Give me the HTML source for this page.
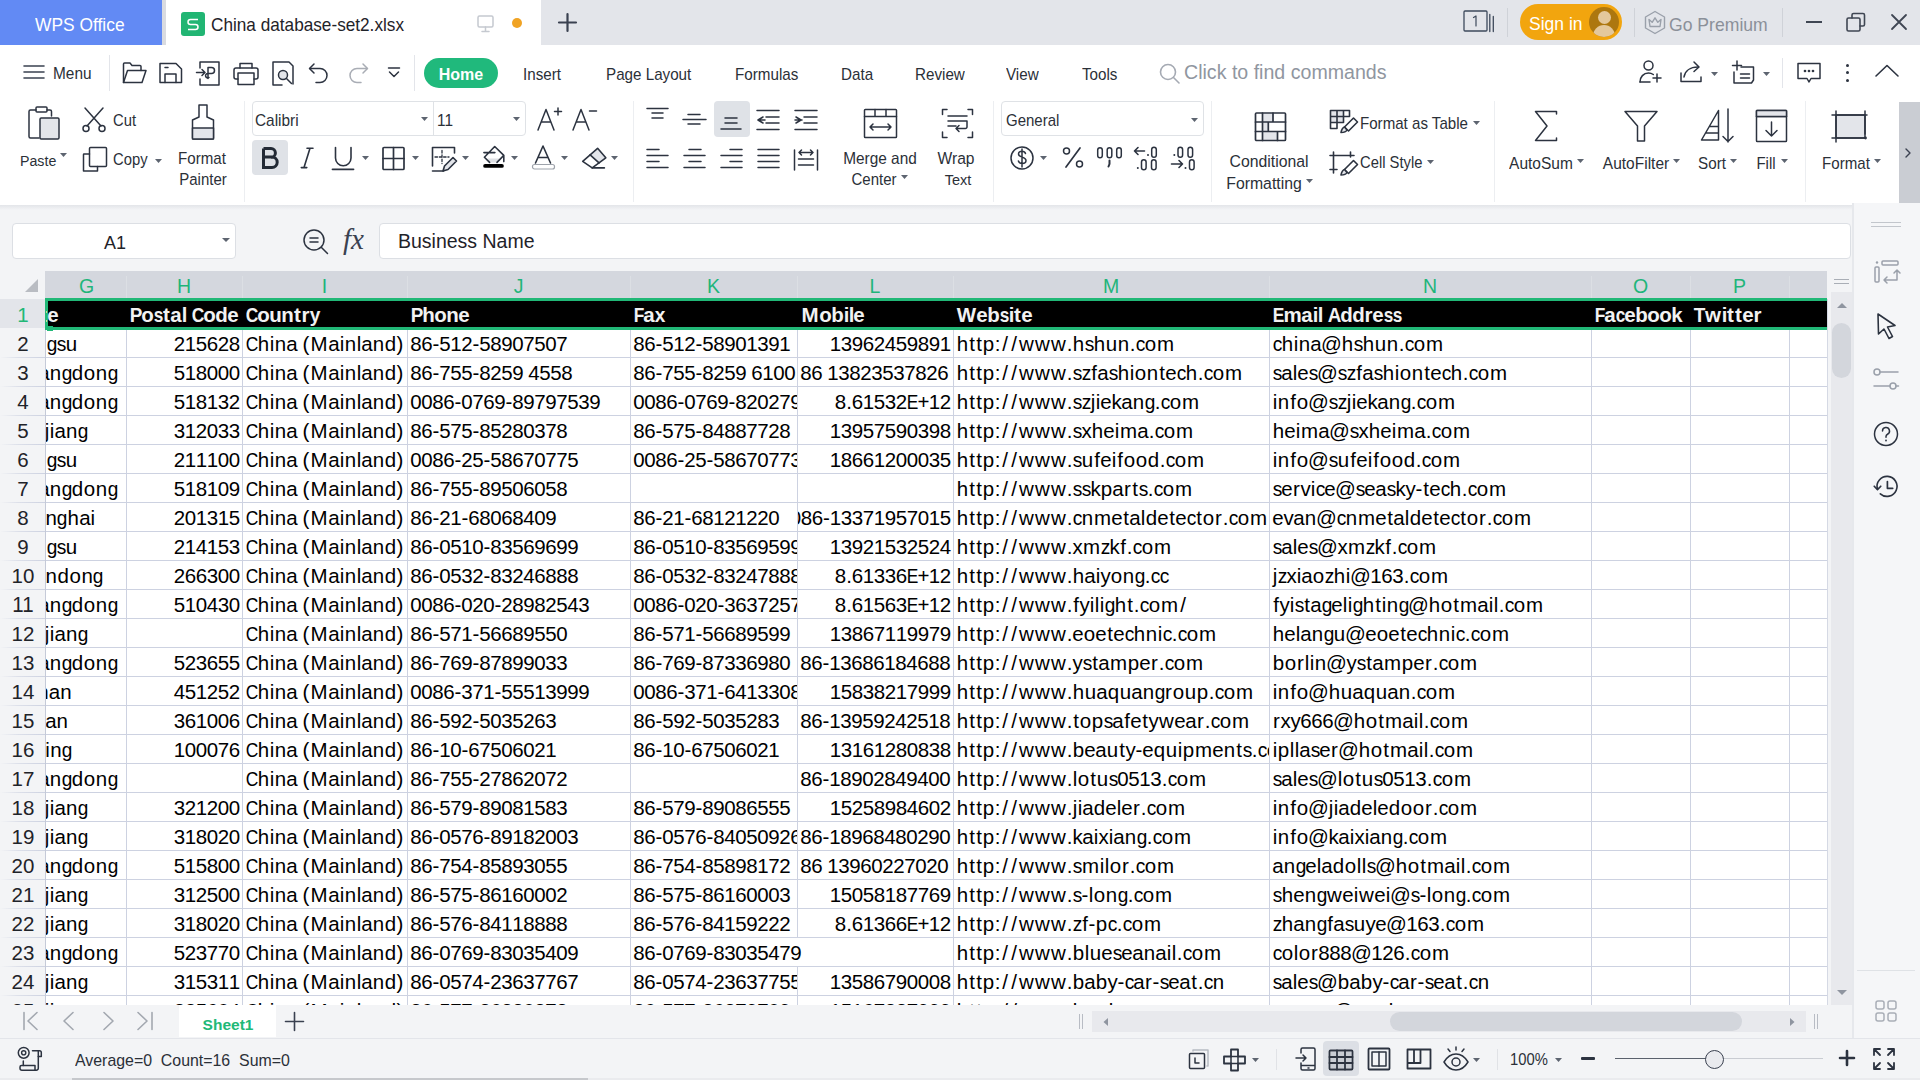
<!DOCTYPE html><html><head><meta charset="utf-8"><style>
*{margin:0;padding:0;box-sizing:border-box}
html,body{width:1920px;height:1080px;overflow:hidden;background:#fff;font-family:"Liberation Sans",sans-serif}
.t{position:absolute;white-space:pre;line-height:1}
.r{position:absolute}
.clip{position:absolute;overflow:hidden}
</style></head><body><div class="r" style="left:0px;top:0px;width:1920px;height:45px;background:#e3e5ea;"></div><div class="r" style="left:0px;top:0px;width:162px;height:45px;background:#628af4;"></div><div class="r" style="left:162px;top:0px;width:4px;height:45px;background:#d9dbe0;"></div><div class="r" style="left:166px;top:0px;width:375px;height:45px;background:#ffffff;"></div><div class="t" style="left:35px;top:17.07px;font-size:17.4px;color:#ffffff;transform:scaleY(1.08);transform-origin:0 14.73px;">WPS Office</div><div class="r" style="left:181px;top:12px;width:24px;height:24px;background:#21b573;border-radius:3px"></div><svg class="r" style="left:181px;top:12px;" width="24" height="24" viewBox="0 0 24 24" fill="none" stroke="#2c3340" stroke-width="1.5" stroke-linecap="round" stroke-linejoin="round"><path d="M17 7.5H9.5a2.5 2.5 0 0 0 0 5h5a2.5 2.5 0 0 1 0 5H7" stroke="#fff" stroke-width="1.5" stroke-linecap="butt"/></svg><div class="t" style="left:211px;top:17.24px;font-size:17.2px;color:#1f2329;transform:scaleY(1.1);transform-origin:0 14.56px;">China database-set2.xlsx</div><svg class="r" style="left:476px;top:14px;" width="20" height="19" viewBox="0 0 20 19" fill="none" stroke="#2c3340" stroke-width="1.5" stroke-linecap="round" stroke-linejoin="round"><rect x="2" y="2" width="15" height="11" rx="1.5" stroke="#c5c9d0"/><path d="M9.5 13v4M6 17.5h7" stroke="#c5c9d0"/></svg><div class="r" style="left:512px;top:18px;width:10px;height:10px;border-radius:50%;background:#f0a324"></div><svg class="r" style="left:557px;top:12px;" width="21" height="21" viewBox="0 0 21 21" fill="none" stroke="#2c3340" stroke-width="1.5" stroke-linecap="round" stroke-linejoin="round"><path d="M10.5 2v17M2 10.5h17" stroke="#3a4150" stroke-width="2.2"/></svg><svg class="r" style="left:1462px;top:9px;" width="36" height="25" viewBox="0 0 36 25" fill="none" stroke="#2c3340" stroke-width="1.5" stroke-linecap="round" stroke-linejoin="round"><rect x="2" y="2" width="23" height="20" rx="1" stroke="#3e4a5c" stroke-width="1.3"/><path d="M27.8 5.5v17M31.3 7.5v15" stroke="#3e4a5c" stroke-width="1.3"/><path d="M11.5 8.5l2.5-1.5V17" stroke="#3e4a5c" stroke-width="1.2"/></svg><div class="r" style="left:1507px;top:8px;width:1px;height:29px;background:#cfd2d8;"></div><div class="r" style="left:1520px;top:4px;width:102px;height:36px;background:#f2a50e;border-radius:18px"></div><div class="t" style="left:1529px;top:16.19px;font-size:17.5px;color:#ffffff;transform:scaleY(1.06);transform-origin:0 14.81px;">Sign in</div><div class="r" style="left:1589px;top:7px;width:30px;height:30px;border-radius:50%;background:#ad770f;overflow:hidden"><div class="r" style="left:8.5px;top:4px;width:13px;height:13px;border-radius:50%;background:#e4c89c"></div><div class="r" style="left:4px;top:18px;width:22px;height:16px;border-radius:11px 11px 0 0;background:#e4c89c"></div></div><div class="r" style="left:1634px;top:8px;width:1px;height:29px;background:#cfd2d8;"></div><svg class="r" style="left:1643px;top:10px;" width="24" height="26" viewBox="0 0 24 26" fill="none" stroke="#2c3340" stroke-width="1.5" stroke-linecap="round" stroke-linejoin="round"><path d="M12 1.5l9.5 5.5v11L12 23.5 2.5 18V7z" stroke="#9aa0aa" stroke-width="1.4"/><path d="M7 16.5h10l1-7-3.2 2.8L12 7.8l-2.8 4.5L6 9.5z" stroke="#9aa0aa" stroke-width="1.4"/></svg><div class="t" style="left:1669px;top:17.10px;font-size:17.6px;color:#8b9099;transform:scaleY(1.08);transform-origin:0 14.90px;">Go Premium</div><div class="r" style="left:1782px;top:8px;width:1px;height:29px;background:#cfd2d8;"></div><div class="r" style="left:1806px;top:21px;width:16px;height:2px;background:#3f4653;"></div><svg class="r" style="left:1845px;top:11px;" width="22" height="22" viewBox="0 0 22 22" fill="none" stroke="#2c3340" stroke-width="1.5" stroke-linecap="round" stroke-linejoin="round"><rect x="2" y="7" width="13" height="13" rx="1.5" stroke="#3f4653" stroke-width="1.6"/><path d="M7 7V4a1.5 1.5 0 0 1 1.5-1.5H18A1.5 1.5 0 0 1 19.5 4v9.5A1.5 1.5 0 0 1 18 15h-3" stroke="#3f4653" stroke-width="1.6"/></svg><svg class="r" style="left:1890px;top:13px;" width="18" height="18" viewBox="0 0 18 18" fill="none" stroke="#2c3340" stroke-width="1.5" stroke-linecap="round" stroke-linejoin="round"><path d="M2 2l14 14M16 2L2 16" stroke="#3f4653" stroke-width="1.8"/></svg><svg class="r" style="left:22px;top:63px;" width="24" height="18" viewBox="0 0 24 18" fill="none" stroke="#2c3340" stroke-width="1.5" stroke-linecap="round" stroke-linejoin="round"><path d="M2 3h20M2 9h20M2 15h20" stroke="#3a4150" stroke-width="1.6"/></svg><div class="t" style="left:53px;top:65.96px;font-size:15.4px;color:#2b3038;transform:scaleY(1.06);transform-origin:0 13.04px;">Menu</div><div class="r" style="left:109px;top:55px;width:1px;height:36px;background:#e3e5ea;"></div><svg class="r" style="left:121px;top:61px;" width="28" height="24" viewBox="0 0 28 24" fill="none" stroke="#2c3340" stroke-width="1.5" stroke-linecap="round" stroke-linejoin="round"><path d="M2.5 21.5V3A1 1 0 0 1 3.5 2H9l2 2.5h8A1 1 0 0 1 20 5.5V9.5"/><path d="M2.5 21.5l4-12h18.5l-4 12z"/></svg><svg class="r" style="left:158px;top:61px;" width="26" height="24" viewBox="0 0 26 24" fill="none" stroke="#2c3340" stroke-width="1.5" stroke-linecap="round" stroke-linejoin="round"><path d="M2 2.5h16l5.5 5.5v13.5H2z"/><path d="M7 21.5v-8.5h11v8.5M7 6.5h3"/></svg><svg class="r" style="left:195px;top:60px;" width="28" height="27" viewBox="0 0 28 27" fill="none" stroke="#2c3340" stroke-width="1.5" stroke-linecap="round" stroke-linejoin="round"><path d="M5 8V2h19v23H5v-6"/><path d="M1.5 12.5h8.5M7 9.5l3 3-3 3"/><path d="M13 18.5v-11h3.5a3 3 0 0 1 0 6h-3.5a2.2 2.2 0 1 0 1 4"/></svg><svg class="r" style="left:232px;top:61px;" width="28" height="26" viewBox="0 0 28 26" fill="none" stroke="#2c3340" stroke-width="1.5" stroke-linecap="round" stroke-linejoin="round"><path d="M8 7V2.5h12V7"/><path d="M6 18H4a2 2 0 0 1-2-2V9a2 2 0 0 1 2-2h20a2 2 0 0 1 2 2v7a2 2 0 0 1-2 2h-2"/><path d="M6 12h16v11.5H6z"/></svg><svg class="r" style="left:270px;top:60px;" width="26" height="27" viewBox="0 0 26 27" fill="none" stroke="#2c3340" stroke-width="1.5" stroke-linecap="round" stroke-linejoin="round"><path d="M12 25H3V2h16l4 4v18"/><circle cx="13" cy="15" r="4.5" fill="#e3e5ea"/><path d="M16.5 18.5l5 5"/></svg><svg class="r" style="left:307px;top:62px;" width="24" height="23" viewBox="0 0 24 23" fill="none" stroke="#2c3340" stroke-width="1.5" stroke-linecap="round" stroke-linejoin="round"><path d="M7 2L2.5 6.5 7 11"/><path d="M3 6.5h10a7 7 0 0 1 0 14H9"/></svg><svg class="r" style="left:346px;top:62px;" width="24" height="23" viewBox="0 0 24 23" fill="none" stroke="#2c3340" stroke-width="1.5" stroke-linecap="round" stroke-linejoin="round"><path d="M17 2l4.5 4.5L17 11" stroke="#a9adb5"/><path d="M21 6.5H11a7 7 0 0 0 0 14h4" stroke="#a9adb5"/></svg><svg class="r" style="left:387px;top:66px;" width="14" height="14" viewBox="0 0 14 14" fill="none" stroke="#2c3340" stroke-width="1.5" stroke-linecap="round" stroke-linejoin="round"><path d="M1.5 2h11M2.5 6l4.5 4.5L11.5 6"/></svg><div class="r" style="left:198px;top:0px;width:0px;height:0px;background:transparent;"></div><div class="r" style="left:414px;top:55px;width:1px;height:36px;background:#e3e5ea;"></div><div class="r" style="left:424px;top:58px;width:74px;height:30px;border-radius:15px;background:#20b97c"></div><div class="t" style="left:-39px;width:1000px;text-align:center;top:67.46px;font-size:16px;color:#ffffff;font-weight:700;">Home</div><div class="t" style="left:523px;top:67.13px;font-size:15.2px;color:#2b3038;transform:scaleY(1.05);transform-origin:0 12.87px;">Insert</div><div class="t" style="left:606px;top:67.13px;font-size:15.2px;color:#2b3038;transform:scaleY(1.05);transform-origin:0 12.87px;">Page Layout</div><div class="t" style="left:735px;top:67.13px;font-size:15.2px;color:#2b3038;transform:scaleY(1.05);transform-origin:0 12.87px;">Formulas</div><div class="t" style="left:841px;top:67.13px;font-size:15.2px;color:#2b3038;transform:scaleY(1.05);transform-origin:0 12.87px;">Data</div><div class="t" style="left:915px;top:67.13px;font-size:15.2px;color:#2b3038;transform:scaleY(1.05);transform-origin:0 12.87px;">Review</div><div class="t" style="left:1006px;top:67.13px;font-size:15.2px;color:#2b3038;transform:scaleY(1.05);transform-origin:0 12.87px;">View</div><div class="t" style="left:1082px;top:67.13px;font-size:15.2px;color:#2b3038;transform:scaleY(1.05);transform-origin:0 12.87px;">Tools</div><svg class="r" style="left:1158px;top:62px;" width="24" height="24" viewBox="0 0 24 24" fill="none" stroke="#2c3340" stroke-width="1.5" stroke-linecap="round" stroke-linejoin="round"><circle cx="10" cy="10" r="7.5" stroke="#a5aab3" stroke-width="1.6"/><path d="M15.5 15.5l5.5 5.5" stroke="#a5aab3" stroke-width="1.6"/></svg><div class="t" style="left:1184px;top:63.41px;font-size:19.6px;color:#9096a0;transform:scaleY(1.04);transform-origin:0 16.59px;">Click to find commands</div><svg class="r" style="left:1638px;top:59px;" width="26" height="26" viewBox="0 0 26 26" fill="none" stroke="#2c3340" stroke-width="1.5" stroke-linecap="round" stroke-linejoin="round"><circle cx="10.5" cy="6.5" r="4.5"/><path d="M2 23c0-5 3.5-9 8.5-9 2 0 3.5.6 4.8 1.5"/><path d="M2 23h10M19 15v8M15 19h8"/></svg><svg class="r" style="left:1678px;top:58px;" width="28" height="26" viewBox="0 0 28 26" fill="none" stroke="#2c3340" stroke-width="1.5" stroke-linecap="round" stroke-linejoin="round"><path d="M3 15v8.5h20V19"/><path d="M6 19c1-6 6-10 14-10"/><path d="M16 4l5 5-5 4.5"/></svg><svg class="r" style="left:1711px;top:72px" width="7" height="4" viewBox="0 0 7 4"><path d="M0 0H7L3.5 4Z" fill="#5d6470"/></svg><svg class="r" style="left:1731px;top:59px;" width="28" height="26" viewBox="0 0 28 26" fill="none" stroke="#2c3340" stroke-width="1.5" stroke-linecap="round" stroke-linejoin="round"><path d="M6 2v9M1.5 6.5h9"/><path d="M10 8h12.5v13l-2 3H3V13"/><path d="M9.5 15h9M9.5 19h9"/></svg><svg class="r" style="left:1763px;top:72px" width="7" height="4" viewBox="0 0 7 4"><path d="M0 0H7L3.5 4Z" fill="#5d6470"/></svg><div class="r" style="left:1782px;top:58px;width:1px;height:30px;background:#e3e5ea;"></div><svg class="r" style="left:1796px;top:61px;" width="26" height="22" viewBox="0 0 26 22" fill="none" stroke="#2c3340" stroke-width="1.5" stroke-linecap="round" stroke-linejoin="round"><path d="M2 2.5h22v15H15l-2 3.5-2-3.5H2z"/><circle cx="9" cy="10" r=".6" fill="#2c3340"/><circle cx="13" cy="10" r=".6" fill="#2c3340"/><circle cx="17" cy="10" r=".6" fill="#2c3340"/></svg><div class="r" style="left:1845.5px;top:63.5px;width:3px;height:3px;border-radius:50%;background:#2c3340"></div><div class="r" style="left:1845.5px;top:71.0px;width:3px;height:3px;border-radius:50%;background:#2c3340"></div><div class="r" style="left:1845.5px;top:78.5px;width:3px;height:3px;border-radius:50%;background:#2c3340"></div><svg class="r" style="left:1874px;top:63px;" width="26" height="16" viewBox="0 0 26 16" fill="none" stroke="#2c3340" stroke-width="1.5" stroke-linecap="round" stroke-linejoin="round"><path d="M2 13L13 2.5 24 13" stroke-width="1.6"/></svg><svg class="r" style="left:26px;top:103px;" width="36" height="38" viewBox="0 0 36 38" fill="none" stroke="#2c3340" stroke-width="1.5" stroke-linecap="round" stroke-linejoin="round"><path d="M10 7H4.5A1.5 1.5 0 0 0 3 8.5v25A1.5 1.5 0 0 0 4.5 35H13"/><path d="M21 7h3a1.5 1.5 0 0 1 1.5 1.5V13"/><rect x="10" y="4" width="11" height="5" rx="1"/><rect x="14" y="15" width="19" height="21" rx="1.2" fill="#e3e5ea"/></svg><div class="t" style="left:20px;top:153.98px;font-size:14.2px;color:#2b3038;transform:scaleY(1.08);transform-origin:0 12.02px;">Paste</div><svg class="r" style="left:60px;top:153px" width="7" height="4" viewBox="0 0 7 4"><path d="M0 0H7L3.5 4Z" fill="#5d6470"/></svg><svg class="r" style="left:81px;top:106px;" width="28" height="27" viewBox="0 0 28 27" fill="none" stroke="#2c3340" stroke-width="1.5" stroke-linecap="round" stroke-linejoin="round"><path d="M4 2l16 18M22 2L6 20"/><circle cx="5" cy="22.5" r="3"/><circle cx="21" cy="22.5" r="3"/></svg><div class="t" style="left:113px;top:114.47px;font-size:14.8px;color:#2b3038;transform:scaleY(1.08);transform-origin:0 12.53px;">Cut</div><svg class="r" style="left:81px;top:145px;" width="28" height="28" viewBox="0 0 28 28" fill="none" stroke="#2c3340" stroke-width="1.5" stroke-linecap="round" stroke-linejoin="round"><rect x="8.5" y="2.5" width="17" height="19" rx="1"/><path d="M8.5 9H3a.5.5 0 0 0-.5.5V26h14v-4.5"/></svg><div class="t" style="left:113px;top:153.47px;font-size:14.8px;color:#2b3038;transform:scaleY(1.08);transform-origin:0 12.53px;">Copy</div><svg class="r" style="left:155px;top:159px" width="7" height="4" viewBox="0 0 7 4"><path d="M0 0H7L3.5 4Z" fill="#5d6470"/></svg><svg class="r" style="left:186px;top:103px;" width="34" height="40" viewBox="0 0 34 40" fill="none" stroke="#2c3340" stroke-width="1.5" stroke-linecap="round" stroke-linejoin="round"><path d="M13 2h8v12l6.5 3V35a1 1 0 0 1-1 1H7.5a1 1 0 0 1-1-1V17l6.5-3z"/><path d="M6.5 25h21v11h-21z" fill="#e3e5ea"/></svg><div class="t" style="left:-298px;width:1000px;text-align:center;top:151.22px;font-size:15.1px;color:#2b3038;transform:scaleY(1.07);transform-origin:0 12.78px;">Format</div><div class="t" style="left:-297px;width:1000px;text-align:center;top:172.30px;font-size:15.0px;color:#2b3038;transform:scaleY(1.07);transform-origin:0 12.70px;">Painter</div><div class="r" style="left:244px;top:101px;width:1px;height:101px;background:#eceef1;"></div><div class="r" style="left:252px;top:101px;width:274px;height:35px;border:1px solid #dfe2e6;border-radius:4px;background:#fff"></div><div class="r" style="left:433px;top:102px;width:1px;height:33px;background:#dfe2e6;"></div><div class="t" style="left:255px;top:112.96px;font-size:15.4px;color:#2b3038;transform:scaleY(1.05);transform-origin:0 13.04px;">Calibri</div><svg class="r" style="left:421px;top:117px" width="7" height="4" viewBox="0 0 7 4"><path d="M0 0H7L3.5 4Z" fill="#5d6470"/></svg><div class="t" style="left:437px;top:112.96px;font-size:15.4px;color:#2b3038;transform:scaleY(1.05);transform-origin:0 13.04px;">11</div><svg class="r" style="left:513px;top:117px" width="7" height="4" viewBox="0 0 7 4"><path d="M0 0H7L3.5 4Z" fill="#5d6470"/></svg><svg class="r" style="left:536px;top:106px;" width="28" height="26" viewBox="0 0 28 26" fill="none" stroke="#2c3340" stroke-width="1.5" stroke-linecap="round" stroke-linejoin="round"><path d="M2 24L10 3.5 18 24M5.5 16h9"/><path d="M22 2v7M18.5 5.5h7"/></svg><svg class="r" style="left:571px;top:106px;" width="28" height="26" viewBox="0 0 28 26" fill="none" stroke="#2c3340" stroke-width="1.5" stroke-linecap="round" stroke-linejoin="round"><path d="M2 24L10 3.5 18 24M5.5 16h9"/><path d="M18.5 5h7"/></svg><div class="r" style="left:252px;top:140px;width:36px;height:35px;background:#dfe2e7;border-radius:4px"></div><svg class="r" style="left:258px;top:145px;" width="26" height="26" viewBox="0 0 26 26" fill="none" stroke="#2c3340" stroke-width="1.5" stroke-linecap="round" stroke-linejoin="round"><path d="M5.5 3.5v19h8.5a5.2 5.2 0 0 0 0-10.4H5.5M5.5 3.5h7.5a4.4 4.4 0 0 1 0 8.8" stroke="#232a35" stroke-width="3" stroke-linecap="butt" stroke-linejoin="miter"/></svg><svg class="r" style="left:295px;top:144px;" width="20" height="28" viewBox="0 0 20 28" fill="none" stroke="#2c3340" stroke-width="1.5" stroke-linecap="round" stroke-linejoin="round"><path d="M15 4.2L9 23.6M12 4.2h6M6.3 23.6h5.5" stroke-width="1.6"/></svg><svg class="r" style="left:329px;top:143px;" width="28" height="29" viewBox="0 0 28 29" fill="none" stroke="#2c3340" stroke-width="1.5" stroke-linecap="round" stroke-linejoin="round"><path d="M6.5 4.5v10.5a7.75 7.75 0 0 0 15.5 0V4.5" stroke-width="1.6"/><path d="M3.5 26.3h21" stroke-width="1.8"/></svg><svg class="r" style="left:362px;top:156px" width="7" height="4" viewBox="0 0 7 4"><path d="M0 0H7L3.5 4Z" fill="#5d6470"/></svg><svg class="r" style="left:381px;top:145px;" width="28" height="27" viewBox="0 0 28 27" fill="none" stroke="#2c3340" stroke-width="1.5" stroke-linecap="round" stroke-linejoin="round"><rect x="2" y="2.5" width="21" height="22" rx="1" stroke-width="1.7"/><path d="M12.5 2.5v22M2 13.5h21" stroke-width="1.7"/></svg><svg class="r" style="left:412px;top:156px" width="7" height="4" viewBox="0 0 7 4"><path d="M0 0H7L3.5 4Z" fill="#5d6470"/></svg><svg class="r" style="left:430px;top:144px;" width="28" height="29" viewBox="0 0 28 29" fill="none" stroke="#2c3340" stroke-width="1.5" stroke-linecap="round" stroke-linejoin="round"><path d="M2.5 22V3.5h22V9M2.5 27h11" stroke-width="1.6"/><path d="M5 13h14M12 6.5v13" stroke-width="1.3" stroke-dasharray="2.5 1.8"/><path d="M13 27l1.5-5 8.5-8.5 3.5 3.5-8.5 8.5z" fill="#e3e5ea" stroke-width="1.6"/></svg><svg class="r" style="left:462px;top:156px" width="7" height="4" viewBox="0 0 7 4"><path d="M0 0H7L3.5 4Z" fill="#5d6470"/></svg><svg class="r" style="left:478px;top:140px;" width="34" height="32" viewBox="0 0 34 32" fill="none" stroke="#2c3340" stroke-width="1.5" stroke-linecap="round" stroke-linejoin="round"><path d="M9.5 18.5H22L18.5 22.4H12z" fill="#dfe1e5" stroke="none"/><path d="M11.6 22.4L6.4 17.2 16.7 6.5 25.8 15.4 19 22.4M5.9 12.6H16.9M25.8 15.4V21.6" stroke-width="1.6"/><rect x="5.2" y="24" width="20.6" height="3.8" rx="1.9" fill="#000" stroke="none"/></svg><svg class="r" style="left:511px;top:156px" width="7" height="4" viewBox="0 0 7 4"><path d="M0 0H7L3.5 4Z" fill="#5d6470"/></svg><svg class="r" style="left:530px;top:143px;" width="30" height="30" viewBox="0 0 30 30" fill="none" stroke="#2c3340" stroke-width="1.5" stroke-linecap="round" stroke-linejoin="round"><path d="M5.5 20L13 3l7.5 17M8 14.5h10" stroke-width="1.6"/><rect x="2.5" y="21.5" width="22" height="4.5" rx="2" stroke="#9ea3ab" stroke-width="1.2"/></svg><svg class="r" style="left:561px;top:156px" width="7" height="4" viewBox="0 0 7 4"><path d="M0 0H7L3.5 4Z" fill="#5d6470"/></svg><svg class="r" style="left:580px;top:145px;" width="32" height="28" viewBox="0 0 32 28" fill="none" stroke="#2c3340" stroke-width="1.5" stroke-linecap="round" stroke-linejoin="round"><path d="M10.1 9.9L17.6 3.3 25.8 12.8 19 17.9z" fill="#e3e5ea" stroke="none"/><path d="M2.7 16.4L17.6 3.3 25.8 12.8 12.2 22.9z" stroke-width="1.6"/><path d="M10.1 9.9L19 17.9M12.2 22.9h12.2" stroke-width="1.6"/></svg><svg class="r" style="left:611px;top:156px" width="7" height="4" viewBox="0 0 7 4"><path d="M0 0H7L3.5 4Z" fill="#5d6470"/></svg><div class="r" style="left:633px;top:101px;width:1px;height:101px;background:#eceef1;"></div><svg class="r" style="left:645px;top:105px;" width="26" height="20" viewBox="0 0 26 20" fill="none" stroke="#2c3340" stroke-width="1.5" stroke-linecap="round" stroke-linejoin="round"><path d="M2 3.5h21"/><path d="M7 8h11"/><path d="M7 13h11"/></svg><div class="r" style="left:714px;top:101px;width:36px;height:36px;background:#dfe2e7;border-radius:4px"></div><svg class="r" style="left:681px;top:110px;" width="28" height="20" viewBox="0 0 28 20" fill="none" stroke="#2c3340" stroke-width="1.5" stroke-linecap="round" stroke-linejoin="round"><path d="M7 4.5h12"/><path d="M2 9.5h23"/><path d="M7 14h12"/></svg><svg class="r" style="left:719px;top:112px;" width="28" height="20" viewBox="0 0 28 20" fill="none" stroke="#2c3340" stroke-width="1.5" stroke-linecap="round" stroke-linejoin="round"><path d="M6 6h12"/><path d="M6 11h12"/><path d="M2 17h20"/></svg><svg class="r" style="left:755px;top:108px;" width="28" height="24" viewBox="0 0 28 24" fill="none" stroke="#2c3340" stroke-width="1.5" stroke-linecap="round" stroke-linejoin="round"><path d="M2 2.5h22M11 9h13M11 15h13M2 21.5h22M8 9l-5 3 5 3M3 12h7"/></svg><svg class="r" style="left:793px;top:108px;" width="28" height="24" viewBox="0 0 28 24" fill="none" stroke="#2c3340" stroke-width="1.5" stroke-linecap="round" stroke-linejoin="round"><path d="M2 2.5h22M11 9h13M11 15h13M2 21.5h22M3 9l5 3-5 3M2 12h7"/></svg><svg class="r" style="left:645px;top:147px;" width="26" height="24" viewBox="0 0 26 24" fill="none" stroke="#2c3340" stroke-width="1.5" stroke-linecap="round" stroke-linejoin="round"><path d="M2 2.5h12"/><path d="M2 8.5h21"/><path d="M2 14.5h12"/><path d="M2 20.5h21"/></svg><svg class="r" style="left:682px;top:147px;" width="26" height="24" viewBox="0 0 26 24" fill="none" stroke="#2c3340" stroke-width="1.5" stroke-linecap="round" stroke-linejoin="round"><path d="M7 2.5h12"/><path d="M2 8.5h21"/><path d="M7 14.5h12"/><path d="M2 20.5h21"/></svg><svg class="r" style="left:719px;top:147px;" width="26" height="24" viewBox="0 0 26 24" fill="none" stroke="#2c3340" stroke-width="1.5" stroke-linecap="round" stroke-linejoin="round"><path d="M11 2.5h12"/><path d="M2 8.5h21"/><path d="M11 14.5h12"/><path d="M2 20.5h21"/></svg><svg class="r" style="left:756px;top:147px;" width="26" height="24" viewBox="0 0 26 24" fill="none" stroke="#2c3340" stroke-width="1.5" stroke-linecap="round" stroke-linejoin="round"><path d="M2 2.5h21"/><path d="M2 8.5h21"/><path d="M2 14.5h21"/><path d="M2 20.5h21"/></svg><svg class="r" style="left:792px;top:146px;" width="28" height="25" viewBox="0 0 28 25" fill="none" stroke="#2c3340" stroke-width="1.5" stroke-linecap="round" stroke-linejoin="round"><path d="M2.5 4v20M25.5 4v20M6.5 13h15M6.5 19h15M7 6.5h14M9.5 4l-2.5 2.5L9.5 9M18.5 4l2.5 2.5L18.5 9"/></svg><svg class="r" style="left:862px;top:107px;" width="38" height="34" viewBox="0 0 38 34" fill="none" stroke="#2c3340" stroke-width="1.5" stroke-linecap="round" stroke-linejoin="round"><rect x="2.5" y="2.5" width="32" height="28" rx=".8"/><path d="M2.5 9.5h32M13 2.5v7M24 2.5v7M8 20h21M11 17l-3 3 3 3M26 17l3 3-3 3"/></svg><div class="t" style="left:380px;width:1000px;text-align:center;top:150.96px;font-size:15.4px;color:#2b3038;transform:scaleY(1.07);transform-origin:0 13.04px;">Merge and</div><div class="t" style="left:374px;width:1000px;text-align:center;top:172.30px;font-size:15.0px;color:#2b3038;transform:scaleY(1.07);transform-origin:0 12.70px;">Center</div><svg class="r" style="left:901px;top:175px" width="7" height="4" viewBox="0 0 7 4"><path d="M0 0H7L3.5 4Z" fill="#5d6470"/></svg><svg class="r" style="left:939px;top:107px;" width="38" height="34" viewBox="0 0 38 34" fill="none" stroke="#2c3340" stroke-width="1.5" stroke-linecap="round" stroke-linejoin="round"><path d="M8 2.5H3.5v5M29 2.5h4.5v5M3.5 25v5.5H8M33.5 25v5.5H29"/><path d="M9 9h19M9 14h19M9 19h8M28 14v6a1.5 1.5 0 0 1-1.5 1.5H17M20 18.5l-3 3 3 3"/></svg><div class="t" style="left:456px;width:1000px;text-align:center;top:150.79px;font-size:15.6px;color:#2b3038;transform:scaleY(1.07);transform-origin:0 13.21px;">Wrap</div><div class="t" style="left:458px;width:1000px;text-align:center;top:172.73px;font-size:14.5px;color:#2b3038;transform:scaleY(1.07);transform-origin:0 12.27px;">Text</div><div class="r" style="left:993px;top:101px;width:1px;height:101px;background:#eceef1;"></div><div class="r" style="left:1001px;top:101px;width:203px;height:35px;border:1px solid #dfe2e6;border-radius:4px;background:#fff"></div><div class="t" style="left:1006px;top:113.30px;font-size:15.0px;color:#2b3038;transform:scaleY(1.06);transform-origin:0 12.70px;">General</div><svg class="r" style="left:1191px;top:118px" width="7" height="4" viewBox="0 0 7 4"><path d="M0 0H7L3.5 4Z" fill="#5d6470"/></svg><svg class="r" style="left:1009px;top:145px;" width="28" height="28" viewBox="0 0 28 28" fill="none" stroke="#2c3340" stroke-width="1.5" stroke-linecap="round" stroke-linejoin="round"><circle cx="13" cy="13" r="11"/><path d="M16.5 8.5c-.5-1.5-2-2.2-3.5-2.2-2 0-3.5 1-3.5 2.8 0 3.8 7.5 2.2 7.5 6.3 0 1.8-1.7 3-3.8 3-1.8 0-3.3-.8-3.8-2.4M13 4v18"/></svg><svg class="r" style="left:1040px;top:156px" width="7" height="4" viewBox="0 0 7 4"><path d="M0 0H7L3.5 4Z" fill="#5d6470"/></svg><svg class="r" style="left:1060px;top:145px;" width="26" height="26" viewBox="0 0 26 26" fill="none" stroke="#2c3340" stroke-width="1.5" stroke-linecap="round" stroke-linejoin="round"><path d="M20 3L6 22" stroke-width="1.7"/><circle cx="6.5" cy="6" r="3"/><circle cx="19.5" cy="19" r="3"/></svg><svg class="r" style="left:1090px;top:140px;" width="110" height="34" viewBox="0 0 110 34" fill="none" stroke="#2c3340" stroke-width="1.5" stroke-linecap="round" stroke-linejoin="round"><rect x="7.7" y="7.7" width="4.6" height="10" rx="2.3" stroke-width="1.5"/><rect x="17.2" y="7.7" width="4.6" height="10" rx="2.3" stroke-width="1.5"/><rect x="26.7" y="7.7" width="4.6" height="10" rx="2.3" stroke-width="1.5"/><path d="M19.5 20.5v3.5l-1 2.5" stroke-width="2"/><path d="M44.5 11h10M48 7.5L44.5 11 48 14.5" stroke-width="1.6"/><circle cx="58" cy="15" r="1" fill="#2c3340" stroke="none"/><rect x="61.7" y="7.2" width="4.6" height="10" rx="2.3" stroke-width="1.5"/><circle cx="47.8" cy="28" r="1" fill="#2c3340" stroke="none"/><rect x="51.5" y="19.7" width="4.6" height="10" rx="2.3" stroke-width="1.5"/><rect x="61.5" y="19.7" width="4.6" height="10" rx="2.3" stroke-width="1.5"/><circle cx="84.3" cy="15" r="1" fill="#2c3340" stroke="none"/><rect x="88" y="7.2" width="4.6" height="10" rx="2.3" stroke-width="1.5"/><rect x="98" y="7.2" width="4.6" height="10" rx="2.3" stroke-width="1.5"/><path d="M81.5 24h11M89 20.5l3.5 3.5-3.5 3.5" stroke-width="1.6"/><circle cx="95.5" cy="28" r="1" fill="#2c3340" stroke="none"/><rect x="99.5" y="19.7" width="4.6" height="10" rx="2.3" stroke-width="1.5"/></svg><div class="r" style="left:1211px;top:101px;width:1px;height:101px;background:#eceef1;"></div><svg class="r" style="left:1253px;top:110px;" width="36" height="34" viewBox="0 0 36 34" fill="none" stroke="#2c3340" stroke-width="1.5" stroke-linecap="round" stroke-linejoin="round"><path d="M10 3.5h10.5v9H10zM10 12.5h5.5v9H10zM10 21.5h15v8.5H10z" fill="#e3e5ea" stroke="none"/><rect x="2.5" y="3" width="30" height="27.5" rx="1" stroke-width="1.7"/><path d="M2.5 12h30M2.5 21.5h30M9.5 3v27.5M20 3v9M15.3 12v9.5M24.5 21.5v9" stroke-width="1.7"/></svg><div class="t" style="left:769px;width:1000px;text-align:center;top:153.63px;font-size:15.8px;color:#2b3038;transform:scaleY(1.05);transform-origin:0 13.37px;">Conditional</div><div class="t" style="left:764px;width:1000px;text-align:center;top:175.63px;font-size:15.8px;color:#2b3038;transform:scaleY(1.05);transform-origin:0 13.37px;">Formatting</div><svg class="r" style="left:1306px;top:179px" width="7" height="4" viewBox="0 0 7 4"><path d="M0 0H7L3.5 4Z" fill="#5d6470"/></svg><svg class="r" style="left:1328px;top:108px;" width="32" height="30" viewBox="0 0 32 30" fill="none" stroke="#2c3340" stroke-width="1.5" stroke-linecap="round" stroke-linejoin="round"><path d="M3 3h12v12H3z" fill="#e3e5ea" stroke="none"/><path d="M2.5 2.5h19v6h-19zM2.5 8.5h13v6h-13zM2.5 14.5h6.5v6H2.5zM9 2.5v12M15.5 2.5v6" stroke-width="1.6"/><path d="M25.5 10l4 4-9 9-4-4z" stroke-width="1.6"/><path d="M16.5 19c-2 .5-3 3-3.5 5.5 2.5 0 5-.5 6-2.5z" fill="#e3e5ea" stroke-width="1.6"/></svg><div class="t" style="left:1360px;top:116.22px;font-size:15.1px;color:#2b3038;transform:scaleY(1.07);transform-origin:0 12.78px;">Format as Table</div><svg class="r" style="left:1473px;top:121px" width="7" height="4" viewBox="0 0 7 4"><path d="M0 0H7L3.5 4Z" fill="#5d6470"/></svg><svg class="r" style="left:1328px;top:149px;" width="32" height="30" viewBox="0 0 32 30" fill="none" stroke="#2c3340" stroke-width="1.5" stroke-linecap="round" stroke-linejoin="round"><path d="M2 6.5h24M5.5 3v21M22.5 3v5M2 20.5h7" stroke-width="1.6"/><path d="M25.5 11.5l4 4-9 9-4-4z" stroke-width="1.6"/><path d="M16.5 20.5c-2 .5-3 3-3.5 5.5 2.5 0 5-.5 6-2.5z" fill="#e3e5ea" stroke-width="1.6"/></svg><div class="t" style="left:1360px;top:156.47px;font-size:14.8px;color:#2b3038;transform:scaleY(1.07);transform-origin:0 12.53px;">Cell Style</div><svg class="r" style="left:1427px;top:160px" width="7" height="4" viewBox="0 0 7 4"><path d="M0 0H7L3.5 4Z" fill="#5d6470"/></svg><div class="r" style="left:1494px;top:101px;width:1px;height:101px;background:#eceef1;"></div><svg class="r" style="left:1532px;top:108px;" width="32" height="36" viewBox="0 0 32 36" fill="none" stroke="#2c3340" stroke-width="1.5" stroke-linecap="round" stroke-linejoin="round"><path d="M24.5 6V3.5H3.5L15 18 3.5 32.5h21V30"/></svg><div class="t" style="left:1041px;width:1000px;text-align:center;top:155.88px;font-size:15.5px;color:#2b3038;transform:scaleY(1.06);transform-origin:0 13.12px;">AutoSum</div><svg class="r" style="left:1577px;top:159px" width="7" height="4" viewBox="0 0 7 4"><path d="M0 0H7L3.5 4Z" fill="#5d6470"/></svg><svg class="r" style="left:1622px;top:108px;" width="38" height="36" viewBox="0 0 38 36" fill="none" stroke="#2c3340" stroke-width="1.5" stroke-linecap="round" stroke-linejoin="round"><path d="M3 3.5h32L22.5 18v15h-7V18z"/></svg><div class="t" style="left:1136px;width:1000px;text-align:center;top:155.88px;font-size:15.5px;color:#2b3038;transform:scaleY(1.06);transform-origin:0 13.12px;">AutoFilter</div><svg class="r" style="left:1673px;top:159px" width="7" height="4" viewBox="0 0 7 4"><path d="M0 0H7L3.5 4Z" fill="#5d6470"/></svg><svg class="r" style="left:1699px;top:107px;" width="40" height="38" viewBox="0 0 40 38" fill="none" stroke="#2c3340" stroke-width="1.5" stroke-linecap="round" stroke-linejoin="round"><path d="M2.5 33L19.5 3.5V33z M2.5 33h17M10.5 19.5h9M6.5 26h13"/><path d="M29 2v33M24 29.5l5 5 5-5"/></svg><div class="t" style="left:1212px;width:1000px;text-align:center;top:156.13px;font-size:15.2px;color:#2b3038;transform:scaleY(1.06);transform-origin:0 12.87px;">Sort</div><svg class="r" style="left:1730px;top:159px" width="7" height="4" viewBox="0 0 7 4"><path d="M0 0H7L3.5 4Z" fill="#5d6470"/></svg><svg class="r" style="left:1754px;top:108px;" width="36" height="36" viewBox="0 0 36 36" fill="none" stroke="#2c3340" stroke-width="1.5" stroke-linecap="round" stroke-linejoin="round"><rect x="2.5" y="2.5" width="30" height="31" rx=".8"/><path d="M2.5 8.5h30" /><path d="M2.5 2.5h30v6h-30z" fill="#e3e5ea"/><path d="M17.5 14v14M12 22.5l5.5 5.5 5.5-5.5"/></svg><div class="t" style="left:1266px;width:1000px;text-align:center;top:156.30px;font-size:15.0px;color:#2b3038;transform:scaleY(1.06);transform-origin:0 12.70px;">Fill</div><svg class="r" style="left:1781px;top:159px" width="7" height="4" viewBox="0 0 7 4"><path d="M0 0H7L3.5 4Z" fill="#5d6470"/></svg><div class="r" style="left:1805px;top:101px;width:1px;height:101px;background:#eceef1;"></div><svg class="r" style="left:1830px;top:109px;" width="40" height="36" viewBox="0 0 40 36" fill="none" stroke="#2c3340" stroke-width="1.5" stroke-linecap="round" stroke-linejoin="round"><path d="M6 6h29v23H6z" fill="#e3e5ea"/><path d="M6 2v31M2 6h35M2 29h33M35 2v23"/><circle cx="35.5" cy="29" r="1.4" fill="#2c3340" stroke="none"/></svg><div class="t" style="left:1346px;width:1000px;text-align:center;top:156.22px;font-size:15.1px;color:#2b3038;transform:scaleY(1.07);transform-origin:0 12.78px;">Format</div><svg class="r" style="left:1874px;top:159px" width="7" height="4" viewBox="0 0 7 4"><path d="M0 0H7L3.5 4Z" fill="#5d6470"/></svg><div class="r" style="left:1899px;top:102px;width:21px;height:101px;background:#cacdd3;"></div><svg class="r" style="left:1903px;top:146px;" width="10" height="14" viewBox="0 0 10 14" fill="none" stroke="#2c3340" stroke-width="1.5" stroke-linecap="round" stroke-linejoin="round"><path d="M3 3l4 4-4 4" stroke="#3a4150" stroke-width="1.4"/></svg><div class="r" style="left:0px;top:205px;width:1853px;height:66px;background:#f3f4f6;"></div><div class="r" style="left:0;top:205px;width:1853px;height:5px;background:linear-gradient(#e3e5e9,#f3f4f6)"></div><div class="r" style="left:12px;top:223px;width:224px;height:36px;border:1px solid #dcdfe4;border-radius:4px;background:#fff"></div><div class="t" style="left:-385px;width:1000px;text-align:center;top:233.76px;font-size:18px;color:#1f2329;">A1</div><svg class="r" style="left:222px;top:238px" width="8" height="4" viewBox="0 0 8 4"><path d="M0 0H8L4.0 4Z" fill="#5d6470"/></svg><svg class="r" style="left:301px;top:227px;" width="30" height="30" viewBox="0 0 30 30" fill="none" stroke="#2c3340" stroke-width="1.5" stroke-linecap="round" stroke-linejoin="round"><circle cx="13" cy="13" r="10"/><path d="M20.5 20.5l6 6M9 11h8M9 15h8"/></svg><div class="t" style="left:343px;top:224.5px;font-size:29px;font-family:'Liberation Serif',serif;font-style:italic;color:#3a4150">fx</div><div class="r" style="left:379px;top:223px;width:1472px;height:36px;border:1px solid #dcdfe4;border-radius:4px;background:#fff"></div><div class="t" style="left:398px;top:232.49px;font-size:19.5px;color:#1f2329;">Business Name</div><style>.row{position:absolute;white-space:pre;line-height:1}.row i{font-style:normal;display:inline-block;text-align:left}</style><div class="r" style="left:0px;top:271px;width:45px;height:28px;background:#f3f4f6;"></div><div class="r" style="left:45px;top:271px;width:1782px;height:27px;background:#d4d7de;"></div><div class="t" style="left:-413.5px;width:1000px;text-align:center;top:276.99px;font-size:19.5px;color:#1fb57a;">G</div><div class="t" style="left:-316.0px;width:1000px;text-align:center;top:276.99px;font-size:19.5px;color:#1fb57a;">H</div><div class="t" style="left:-175.5px;width:1000px;text-align:center;top:276.99px;font-size:19.5px;color:#1fb57a;">I</div><div class="t" style="left:18.5px;width:1000px;text-align:center;top:276.99px;font-size:19.5px;color:#1fb57a;">J</div><div class="t" style="left:213.5px;width:1000px;text-align:center;top:276.99px;font-size:19.5px;color:#1fb57a;">K</div><div class="t" style="left:375.0px;width:1000px;text-align:center;top:276.99px;font-size:19.5px;color:#1fb57a;">L</div><div class="t" style="left:611.0px;width:1000px;text-align:center;top:276.99px;font-size:19.5px;color:#1fb57a;">M</div><div class="t" style="left:930.0px;width:1000px;text-align:center;top:276.99px;font-size:19.5px;color:#1fb57a;">N</div><div class="t" style="left:1140.5px;width:1000px;text-align:center;top:276.99px;font-size:19.5px;color:#1fb57a;">O</div><div class="t" style="left:1239.5px;width:1000px;text-align:center;top:276.99px;font-size:19.5px;color:#1fb57a;">P</div><div class="r" style="left:126px;top:276px;width:1px;height:22px;background:#dcdfe4;"></div><div class="r" style="left:242px;top:276px;width:1px;height:22px;background:#dcdfe4;"></div><div class="r" style="left:407px;top:276px;width:1px;height:22px;background:#dcdfe4;"></div><div class="r" style="left:630px;top:276px;width:1px;height:22px;background:#dcdfe4;"></div><div class="r" style="left:797px;top:276px;width:1px;height:22px;background:#dcdfe4;"></div><div class="r" style="left:953px;top:276px;width:1px;height:22px;background:#dcdfe4;"></div><div class="r" style="left:1269px;top:276px;width:1px;height:22px;background:#dcdfe4;"></div><div class="r" style="left:1591px;top:276px;width:1px;height:22px;background:#dcdfe4;"></div><div class="r" style="left:1690px;top:276px;width:1px;height:22px;background:#dcdfe4;"></div><div class="r" style="left:1789px;top:276px;width:1px;height:22px;background:#dcdfe4;"></div><svg class="r" style="left:24px;top:278px;" width="16" height="16" viewBox="0 0 16 16" fill="none" stroke="#2c3340" stroke-width="1.5" stroke-linecap="round" stroke-linejoin="round"><path d="M14 1L14 14L1 14Z" fill="#b9bcc2" stroke="none"/></svg><div class="r" style="left:46px;top:299px;width:1781px;height:706px;background:#ffffff;"></div><div class="r" style="left:0px;top:299px;width:45px;height:706px;background:#f3f4f6;"></div><div class="r" style="left:0px;top:299px;width:45px;height:29px;background:#e3e5ea;"></div><div class="r" style="left:0;top:357px;width:45px;height:1px;background:linear-gradient(90deg,rgba(205,210,225,0) 0%,rgba(205,210,225,.6) 40%,#cdd2e1 100%)"></div><div class="r" style="left:0;top:386px;width:45px;height:1px;background:linear-gradient(90deg,rgba(205,210,225,0) 0%,rgba(205,210,225,.6) 40%,#cdd2e1 100%)"></div><div class="r" style="left:0;top:415px;width:45px;height:1px;background:linear-gradient(90deg,rgba(205,210,225,0) 0%,rgba(205,210,225,.6) 40%,#cdd2e1 100%)"></div><div class="r" style="left:0;top:444px;width:45px;height:1px;background:linear-gradient(90deg,rgba(205,210,225,0) 0%,rgba(205,210,225,.6) 40%,#cdd2e1 100%)"></div><div class="r" style="left:0;top:473px;width:45px;height:1px;background:linear-gradient(90deg,rgba(205,210,225,0) 0%,rgba(205,210,225,.6) 40%,#cdd2e1 100%)"></div><div class="r" style="left:0;top:502px;width:45px;height:1px;background:linear-gradient(90deg,rgba(205,210,225,0) 0%,rgba(205,210,225,.6) 40%,#cdd2e1 100%)"></div><div class="r" style="left:0;top:531px;width:45px;height:1px;background:linear-gradient(90deg,rgba(205,210,225,0) 0%,rgba(205,210,225,.6) 40%,#cdd2e1 100%)"></div><div class="r" style="left:0;top:560px;width:45px;height:1px;background:linear-gradient(90deg,rgba(205,210,225,0) 0%,rgba(205,210,225,.6) 40%,#cdd2e1 100%)"></div><div class="r" style="left:0;top:589px;width:45px;height:1px;background:linear-gradient(90deg,rgba(205,210,225,0) 0%,rgba(205,210,225,.6) 40%,#cdd2e1 100%)"></div><div class="r" style="left:0;top:618px;width:45px;height:1px;background:linear-gradient(90deg,rgba(205,210,225,0) 0%,rgba(205,210,225,.6) 40%,#cdd2e1 100%)"></div><div class="r" style="left:0;top:647px;width:45px;height:1px;background:linear-gradient(90deg,rgba(205,210,225,0) 0%,rgba(205,210,225,.6) 40%,#cdd2e1 100%)"></div><div class="r" style="left:0;top:676px;width:45px;height:1px;background:linear-gradient(90deg,rgba(205,210,225,0) 0%,rgba(205,210,225,.6) 40%,#cdd2e1 100%)"></div><div class="r" style="left:0;top:705px;width:45px;height:1px;background:linear-gradient(90deg,rgba(205,210,225,0) 0%,rgba(205,210,225,.6) 40%,#cdd2e1 100%)"></div><div class="r" style="left:0;top:734px;width:45px;height:1px;background:linear-gradient(90deg,rgba(205,210,225,0) 0%,rgba(205,210,225,.6) 40%,#cdd2e1 100%)"></div><div class="r" style="left:0;top:763px;width:45px;height:1px;background:linear-gradient(90deg,rgba(205,210,225,0) 0%,rgba(205,210,225,.6) 40%,#cdd2e1 100%)"></div><div class="r" style="left:0;top:792px;width:45px;height:1px;background:linear-gradient(90deg,rgba(205,210,225,0) 0%,rgba(205,210,225,.6) 40%,#cdd2e1 100%)"></div><div class="r" style="left:0;top:821px;width:45px;height:1px;background:linear-gradient(90deg,rgba(205,210,225,0) 0%,rgba(205,210,225,.6) 40%,#cdd2e1 100%)"></div><div class="r" style="left:0;top:850px;width:45px;height:1px;background:linear-gradient(90deg,rgba(205,210,225,0) 0%,rgba(205,210,225,.6) 40%,#cdd2e1 100%)"></div><div class="r" style="left:0;top:879px;width:45px;height:1px;background:linear-gradient(90deg,rgba(205,210,225,0) 0%,rgba(205,210,225,.6) 40%,#cdd2e1 100%)"></div><div class="r" style="left:0;top:908px;width:45px;height:1px;background:linear-gradient(90deg,rgba(205,210,225,0) 0%,rgba(205,210,225,.6) 40%,#cdd2e1 100%)"></div><div class="r" style="left:0;top:937px;width:45px;height:1px;background:linear-gradient(90deg,rgba(205,210,225,0) 0%,rgba(205,210,225,.6) 40%,#cdd2e1 100%)"></div><div class="r" style="left:0;top:966px;width:45px;height:1px;background:linear-gradient(90deg,rgba(205,210,225,0) 0%,rgba(205,210,225,.6) 40%,#cdd2e1 100%)"></div><div class="r" style="left:0;top:995px;width:45px;height:1px;background:linear-gradient(90deg,rgba(205,210,225,0) 0%,rgba(205,210,225,.6) 40%,#cdd2e1 100%)"></div><div class="r" style="left:45px;top:299px;width:1px;height:706px;background:#c5cad8;"></div><div class="t" style="left:-477px;width:1000px;text-align:center;top:304.65px;font-size:20.5px;color:#21b877;">1</div><div class="t" style="left:-477px;width:1000px;text-align:center;top:333.65px;font-size:20.5px;color:#1f2329;">2</div><div class="t" style="left:-477px;width:1000px;text-align:center;top:362.65px;font-size:20.5px;color:#1f2329;">3</div><div class="t" style="left:-477px;width:1000px;text-align:center;top:391.65px;font-size:20.5px;color:#1f2329;">4</div><div class="t" style="left:-477px;width:1000px;text-align:center;top:420.65px;font-size:20.5px;color:#1f2329;">5</div><div class="t" style="left:-477px;width:1000px;text-align:center;top:449.65px;font-size:20.5px;color:#1f2329;">6</div><div class="t" style="left:-477px;width:1000px;text-align:center;top:478.65px;font-size:20.5px;color:#1f2329;">7</div><div class="t" style="left:-477px;width:1000px;text-align:center;top:507.65px;font-size:20.5px;color:#1f2329;">8</div><div class="t" style="left:-477px;width:1000px;text-align:center;top:536.65px;font-size:20.5px;color:#1f2329;">9</div><div class="t" style="left:-477px;width:1000px;text-align:center;top:565.65px;font-size:20.5px;color:#1f2329;">10</div><div class="t" style="left:-477px;width:1000px;text-align:center;top:594.65px;font-size:20.5px;color:#1f2329;transform:scaleY(1.05);transform-origin:0 17.35px;">11</div><div class="t" style="left:-477px;width:1000px;text-align:center;top:623.65px;font-size:20.5px;color:#1f2329;">12</div><div class="t" style="left:-477px;width:1000px;text-align:center;top:652.65px;font-size:20.5px;color:#1f2329;">13</div><div class="t" style="left:-477px;width:1000px;text-align:center;top:681.65px;font-size:20.5px;color:#1f2329;">14</div><div class="t" style="left:-477px;width:1000px;text-align:center;top:710.65px;font-size:20.5px;color:#1f2329;">15</div><div class="t" style="left:-477px;width:1000px;text-align:center;top:739.65px;font-size:20.5px;color:#1f2329;">16</div><div class="t" style="left:-477px;width:1000px;text-align:center;top:768.65px;font-size:20.5px;color:#1f2329;">17</div><div class="t" style="left:-477px;width:1000px;text-align:center;top:797.65px;font-size:20.5px;color:#1f2329;">18</div><div class="t" style="left:-477px;width:1000px;text-align:center;top:826.65px;font-size:20.5px;color:#1f2329;">19</div><div class="t" style="left:-477px;width:1000px;text-align:center;top:855.65px;font-size:20.5px;color:#1f2329;">20</div><div class="t" style="left:-477px;width:1000px;text-align:center;top:884.65px;font-size:20.5px;color:#1f2329;">21</div><div class="t" style="left:-477px;width:1000px;text-align:center;top:913.65px;font-size:20.5px;color:#1f2329;">22</div><div class="t" style="left:-477px;width:1000px;text-align:center;top:942.65px;font-size:20.5px;color:#1f2329;">23</div><div class="t" style="left:-477px;width:1000px;text-align:center;top:971.65px;font-size:20.5px;color:#1f2329;">24</div><div class="t" style="left:-477px;width:1000px;text-align:center;top:1000.65px;font-size:20.5px;color:#1f2329;">25</div><div class="r" style="left:46px;top:357px;width:1781px;height:1px;background:#cdd2e1;"></div><div class="r" style="left:46px;top:386px;width:1781px;height:1px;background:#cdd2e1;"></div><div class="r" style="left:46px;top:415px;width:1781px;height:1px;background:#cdd2e1;"></div><div class="r" style="left:46px;top:444px;width:1781px;height:1px;background:#cdd2e1;"></div><div class="r" style="left:46px;top:473px;width:1781px;height:1px;background:#cdd2e1;"></div><div class="r" style="left:46px;top:502px;width:1781px;height:1px;background:#cdd2e1;"></div><div class="r" style="left:46px;top:531px;width:1781px;height:1px;background:#cdd2e1;"></div><div class="r" style="left:46px;top:560px;width:1781px;height:1px;background:#cdd2e1;"></div><div class="r" style="left:46px;top:589px;width:1781px;height:1px;background:#cdd2e1;"></div><div class="r" style="left:46px;top:618px;width:1781px;height:1px;background:#cdd2e1;"></div><div class="r" style="left:46px;top:647px;width:1781px;height:1px;background:#cdd2e1;"></div><div class="r" style="left:46px;top:676px;width:1781px;height:1px;background:#cdd2e1;"></div><div class="r" style="left:46px;top:705px;width:1781px;height:1px;background:#cdd2e1;"></div><div class="r" style="left:46px;top:734px;width:1781px;height:1px;background:#cdd2e1;"></div><div class="r" style="left:46px;top:763px;width:1781px;height:1px;background:#cdd2e1;"></div><div class="r" style="left:46px;top:792px;width:1781px;height:1px;background:#cdd2e1;"></div><div class="r" style="left:46px;top:821px;width:1781px;height:1px;background:#cdd2e1;"></div><div class="r" style="left:46px;top:850px;width:1781px;height:1px;background:#cdd2e1;"></div><div class="r" style="left:46px;top:879px;width:1781px;height:1px;background:#cdd2e1;"></div><div class="r" style="left:46px;top:908px;width:1781px;height:1px;background:#cdd2e1;"></div><div class="r" style="left:46px;top:937px;width:1781px;height:1px;background:#cdd2e1;"></div><div class="r" style="left:46px;top:966px;width:1781px;height:1px;background:#cdd2e1;"></div><div class="r" style="left:46px;top:995px;width:1781px;height:1px;background:#cdd2e1;"></div><div class="r" style="left:126px;top:328px;width:1px;height:677px;background:#cdd2e1;"></div><div class="r" style="left:242px;top:328px;width:1px;height:677px;background:#cdd2e1;"></div><div class="r" style="left:407px;top:328px;width:1px;height:677px;background:#cdd2e1;"></div><div class="r" style="left:630px;top:328px;width:1px;height:677px;background:#cdd2e1;"></div><div class="r" style="left:797px;top:328px;width:1px;height:609px;background:#cdd2e1;"></div><div class="r" style="left:797px;top:966px;width:1px;height:39px;background:#cdd2e1;"></div><div class="r" style="left:953px;top:328px;width:1px;height:677px;background:#cdd2e1;"></div><div class="r" style="left:1269px;top:328px;width:1px;height:677px;background:#cdd2e1;"></div><div class="r" style="left:1591px;top:328px;width:1px;height:677px;background:#cdd2e1;"></div><div class="r" style="left:1690px;top:328px;width:1px;height:677px;background:#cdd2e1;"></div><div class="r" style="left:1789px;top:328px;width:1px;height:677px;background:#cdd2e1;"></div><div class="clip" style="left:46px;top:328px;width:80px;height:28px"><div class="row" style="left:-11.50px;top:5.65px;font-size:20.5px;color:#000;"><i class="k0">n</i><i class="k1">g</i><i class="k2">s</i><i class="k3">u</i></div></div><div class="clip" style="left:127px;top:328px;width:115px;height:28px"><div class="row" style="left:47.00px;top:5.65px;font-size:20.5px;color:#000;"><i class="k4">2</i><i class="k5">1</i><i class="k6">5</i><i class="k7">6</i><i class="k4">2</i><i class="k8">8</i></div></div><div class="clip" style="left:243px;top:328px;width:164px;height:28px"><div class="row" style="left:2.50px;top:5.65px;font-size:20.5px;color:#000;"><i class="k9">C</i><i class="k10">h</i><i class="k11">i</i><i class="k0">n</i><i class="k12">a</i><i class="k13"> </i><i class="k14">(</i><i class="k15">M</i><i class="k12">a</i><i class="k11">i</i><i class="k0">n</i><i class="k16">l</i><i class="k12">a</i><i class="k0">n</i><i class="k17">d</i><i class="k18">)</i></div></div><div class="clip" style="left:408px;top:328px;width:222px;height:28px"><div class="row" style="left:2.50px;top:5.65px;font-size:20.5px;color:#000;"><i class="k8">8</i><i class="k7">6</i><i class="k19">-</i><i class="k6">5</i><i class="k5">1</i><i class="k4">2</i><i class="k19">-</i><i class="k6">5</i><i class="k8">8</i><i class="k20">9</i><i class="k21">0</i><i class="k22">7</i><i class="k6">5</i><i class="k21">0</i><i class="k22">7</i></div></div><div class="clip" style="left:631px;top:328px;width:166px;height:28px"><div class="row" style="left:2.50px;top:5.65px;font-size:20.5px;color:#000;"><i class="k8">8</i><i class="k7">6</i><i class="k19">-</i><i class="k6">5</i><i class="k5">1</i><i class="k4">2</i><i class="k19">-</i><i class="k6">5</i><i class="k8">8</i><i class="k20">9</i><i class="k21">0</i><i class="k5">1</i><i class="k23">3</i><i class="k20">9</i><i class="k5">1</i></div></div><div class="clip" style="left:798px;top:328px;width:155px;height:28px"><div class="row" style="left:32.00px;top:5.65px;font-size:20.5px;color:#000;"><i class="k5">1</i><i class="k23">3</i><i class="k20">9</i><i class="k7">6</i><i class="k4">2</i><i class="k24">4</i><i class="k6">5</i><i class="k20">9</i><i class="k8">8</i><i class="k20">9</i><i class="k5">1</i></div></div><div class="clip" style="left:954px;top:328px;width:315px;height:28px"><div class="row" style="left:2.50px;top:5.65px;font-size:20.5px;color:#000;"><i class="k10">h</i><i class="k25">t</i><i class="k25">t</i><i class="k26">p</i><i class="k27">:</i><i class="k28">/</i><i class="k28">/</i><i class="k29">w</i><i class="k29">w</i><i class="k29">w</i><i class="k30">.</i><i class="k10">h</i><i class="k2">s</i><i class="k10">h</i><i class="k3">u</i><i class="k0">n</i><i class="k30">.</i><i class="k31">c</i><i class="k32">o</i><i class="k33">m</i></div></div><div class="clip" style="left:1270px;top:328px;width:321px;height:28px"><div class="row" style="left:2.50px;top:5.65px;font-size:20.5px;color:#000;"><i class="k31">c</i><i class="k10">h</i><i class="k11">i</i><i class="k0">n</i><i class="k12">a</i><i class="k34">@</i><i class="k10">h</i><i class="k2">s</i><i class="k10">h</i><i class="k3">u</i><i class="k0">n</i><i class="k30">.</i><i class="k31">c</i><i class="k32">o</i><i class="k33">m</i></div></div><div class="clip" style="left:46px;top:357px;width:80px;height:28px"><div class="row" style="left:-7.50px;top:5.65px;font-size:20.5px;color:#000;"><i class="k12">a</i><i class="k0">n</i><i class="k1">g</i><i class="k17">d</i><i class="k32">o</i><i class="k0">n</i><i class="k1">g</i></div></div><div class="clip" style="left:127px;top:357px;width:115px;height:28px"><div class="row" style="left:47.00px;top:5.65px;font-size:20.5px;color:#000;"><i class="k6">5</i><i class="k5">1</i><i class="k8">8</i><i class="k21">0</i><i class="k21">0</i><i class="k21">0</i></div></div><div class="clip" style="left:243px;top:357px;width:164px;height:28px"><div class="row" style="left:2.50px;top:5.65px;font-size:20.5px;color:#000;"><i class="k9">C</i><i class="k10">h</i><i class="k11">i</i><i class="k0">n</i><i class="k12">a</i><i class="k13"> </i><i class="k14">(</i><i class="k15">M</i><i class="k12">a</i><i class="k11">i</i><i class="k0">n</i><i class="k16">l</i><i class="k12">a</i><i class="k0">n</i><i class="k17">d</i><i class="k18">)</i></div></div><div class="clip" style="left:408px;top:357px;width:222px;height:28px"><div class="row" style="left:2.50px;top:5.65px;font-size:20.5px;color:#000;"><i class="k8">8</i><i class="k7">6</i><i class="k19">-</i><i class="k22">7</i><i class="k6">5</i><i class="k6">5</i><i class="k19">-</i><i class="k8">8</i><i class="k4">2</i><i class="k6">5</i><i class="k20">9</i><i class="k13"> </i><i class="k24">4</i><i class="k6">5</i><i class="k6">5</i><i class="k8">8</i></div></div><div class="clip" style="left:631px;top:357px;width:166px;height:28px"><div class="row" style="left:2.50px;top:5.65px;font-size:20.5px;color:#000;"><i class="k8">8</i><i class="k7">6</i><i class="k19">-</i><i class="k22">7</i><i class="k6">5</i><i class="k6">5</i><i class="k19">-</i><i class="k8">8</i><i class="k4">2</i><i class="k6">5</i><i class="k20">9</i><i class="k13"> </i><i class="k7">6</i><i class="k5">1</i><i class="k21">0</i><i class="k21">0</i></div></div><div class="clip" style="left:798px;top:357px;width:155px;height:28px"><div class="row" style="left:2.50px;top:5.65px;font-size:20.5px;color:#000;"><i class="k8">8</i><i class="k7">6</i><i class="k13"> </i><i class="k5">1</i><i class="k23">3</i><i class="k8">8</i><i class="k4">2</i><i class="k23">3</i><i class="k6">5</i><i class="k23">3</i><i class="k22">7</i><i class="k8">8</i><i class="k4">2</i><i class="k7">6</i></div></div><div class="clip" style="left:954px;top:357px;width:315px;height:28px"><div class="row" style="left:2.50px;top:5.65px;font-size:20.5px;color:#000;"><i class="k10">h</i><i class="k25">t</i><i class="k25">t</i><i class="k26">p</i><i class="k27">:</i><i class="k28">/</i><i class="k28">/</i><i class="k29">w</i><i class="k29">w</i><i class="k29">w</i><i class="k30">.</i><i class="k2">s</i><i class="k35">z</i><i class="k36">f</i><i class="k12">a</i><i class="k2">s</i><i class="k10">h</i><i class="k11">i</i><i class="k32">o</i><i class="k0">n</i><i class="k25">t</i><i class="k37">e</i><i class="k31">c</i><i class="k10">h</i><i class="k30">.</i><i class="k31">c</i><i class="k32">o</i><i class="k33">m</i></div></div><div class="clip" style="left:1270px;top:357px;width:321px;height:28px"><div class="row" style="left:2.50px;top:5.65px;font-size:20.5px;color:#000;"><i class="k2">s</i><i class="k12">a</i><i class="k16">l</i><i class="k37">e</i><i class="k2">s</i><i class="k34">@</i><i class="k2">s</i><i class="k35">z</i><i class="k36">f</i><i class="k12">a</i><i class="k2">s</i><i class="k10">h</i><i class="k11">i</i><i class="k32">o</i><i class="k0">n</i><i class="k25">t</i><i class="k37">e</i><i class="k31">c</i><i class="k10">h</i><i class="k30">.</i><i class="k31">c</i><i class="k32">o</i><i class="k33">m</i></div></div><div class="clip" style="left:46px;top:386px;width:80px;height:28px"><div class="row" style="left:-7.50px;top:5.65px;font-size:20.5px;color:#000;"><i class="k12">a</i><i class="k0">n</i><i class="k1">g</i><i class="k17">d</i><i class="k32">o</i><i class="k0">n</i><i class="k1">g</i></div></div><div class="clip" style="left:127px;top:386px;width:115px;height:28px"><div class="row" style="left:47.00px;top:5.65px;font-size:20.5px;color:#000;"><i class="k6">5</i><i class="k5">1</i><i class="k8">8</i><i class="k5">1</i><i class="k23">3</i><i class="k4">2</i></div></div><div class="clip" style="left:243px;top:386px;width:164px;height:28px"><div class="row" style="left:2.50px;top:5.65px;font-size:20.5px;color:#000;"><i class="k9">C</i><i class="k10">h</i><i class="k11">i</i><i class="k0">n</i><i class="k12">a</i><i class="k13"> </i><i class="k14">(</i><i class="k15">M</i><i class="k12">a</i><i class="k11">i</i><i class="k0">n</i><i class="k16">l</i><i class="k12">a</i><i class="k0">n</i><i class="k17">d</i><i class="k18">)</i></div></div><div class="clip" style="left:408px;top:386px;width:222px;height:28px"><div class="row" style="left:2.50px;top:5.65px;font-size:20.5px;color:#000;"><i class="k21">0</i><i class="k21">0</i><i class="k8">8</i><i class="k7">6</i><i class="k19">-</i><i class="k21">0</i><i class="k22">7</i><i class="k7">6</i><i class="k20">9</i><i class="k19">-</i><i class="k8">8</i><i class="k20">9</i><i class="k22">7</i><i class="k20">9</i><i class="k22">7</i><i class="k6">5</i><i class="k23">3</i><i class="k20">9</i></div></div><div class="clip" style="left:631px;top:386px;width:166px;height:28px"><div class="row" style="left:2.50px;top:5.65px;font-size:20.5px;color:#000;"><i class="k21">0</i><i class="k21">0</i><i class="k8">8</i><i class="k7">6</i><i class="k19">-</i><i class="k21">0</i><i class="k22">7</i><i class="k7">6</i><i class="k20">9</i><i class="k19">-</i><i class="k8">8</i><i class="k4">2</i><i class="k21">0</i><i class="k4">2</i><i class="k22">7</i><i class="k20">9</i><i class="k20">9</i><i class="k20">9</i></div></div><div class="clip" style="left:798px;top:386px;width:155px;height:28px"><div class="row" style="left:37.00px;top:5.65px;font-size:20.5px;color:#000;"><i class="k8">8</i><i class="k30">.</i><i class="k7">6</i><i class="k5">1</i><i class="k6">5</i><i class="k23">3</i><i class="k4">2</i><i class="k38">E</i><i class="k39">+</i><i class="k5">1</i><i class="k4">2</i></div></div><div class="clip" style="left:954px;top:386px;width:315px;height:28px"><div class="row" style="left:2.50px;top:5.65px;font-size:20.5px;color:#000;"><i class="k10">h</i><i class="k25">t</i><i class="k25">t</i><i class="k26">p</i><i class="k27">:</i><i class="k28">/</i><i class="k28">/</i><i class="k29">w</i><i class="k29">w</i><i class="k29">w</i><i class="k30">.</i><i class="k2">s</i><i class="k35">z</i><i class="k40">j</i><i class="k11">i</i><i class="k37">e</i><i class="k41">k</i><i class="k12">a</i><i class="k0">n</i><i class="k1">g</i><i class="k30">.</i><i class="k31">c</i><i class="k32">o</i><i class="k33">m</i></div></div><div class="clip" style="left:1270px;top:386px;width:321px;height:28px"><div class="row" style="left:2.50px;top:5.65px;font-size:20.5px;color:#000;"><i class="k11">i</i><i class="k0">n</i><i class="k36">f</i><i class="k32">o</i><i class="k34">@</i><i class="k2">s</i><i class="k35">z</i><i class="k40">j</i><i class="k11">i</i><i class="k37">e</i><i class="k41">k</i><i class="k12">a</i><i class="k0">n</i><i class="k1">g</i><i class="k30">.</i><i class="k31">c</i><i class="k32">o</i><i class="k33">m</i></div></div><div class="clip" style="left:46px;top:415px;width:80px;height:28px"><div class="row" style="left:-12.40px;top:5.65px;font-size:20.5px;color:#000;"><i class="k37">e</i><i class="k40">j</i><i class="k11">i</i><i class="k12">a</i><i class="k0">n</i><i class="k1">g</i></div></div><div class="clip" style="left:127px;top:415px;width:115px;height:28px"><div class="row" style="left:47.00px;top:5.65px;font-size:20.5px;color:#000;"><i class="k23">3</i><i class="k5">1</i><i class="k4">2</i><i class="k21">0</i><i class="k23">3</i><i class="k23">3</i></div></div><div class="clip" style="left:243px;top:415px;width:164px;height:28px"><div class="row" style="left:2.50px;top:5.65px;font-size:20.5px;color:#000;"><i class="k9">C</i><i class="k10">h</i><i class="k11">i</i><i class="k0">n</i><i class="k12">a</i><i class="k13"> </i><i class="k14">(</i><i class="k15">M</i><i class="k12">a</i><i class="k11">i</i><i class="k0">n</i><i class="k16">l</i><i class="k12">a</i><i class="k0">n</i><i class="k17">d</i><i class="k18">)</i></div></div><div class="clip" style="left:408px;top:415px;width:222px;height:28px"><div class="row" style="left:2.50px;top:5.65px;font-size:20.5px;color:#000;"><i class="k8">8</i><i class="k7">6</i><i class="k19">-</i><i class="k6">5</i><i class="k22">7</i><i class="k6">5</i><i class="k19">-</i><i class="k8">8</i><i class="k6">5</i><i class="k4">2</i><i class="k8">8</i><i class="k21">0</i><i class="k23">3</i><i class="k22">7</i><i class="k8">8</i></div></div><div class="clip" style="left:631px;top:415px;width:166px;height:28px"><div class="row" style="left:2.50px;top:5.65px;font-size:20.5px;color:#000;"><i class="k8">8</i><i class="k7">6</i><i class="k19">-</i><i class="k6">5</i><i class="k22">7</i><i class="k6">5</i><i class="k19">-</i><i class="k8">8</i><i class="k24">4</i><i class="k8">8</i><i class="k8">8</i><i class="k22">7</i><i class="k22">7</i><i class="k4">2</i><i class="k8">8</i></div></div><div class="clip" style="left:798px;top:415px;width:155px;height:28px"><div class="row" style="left:32.00px;top:5.65px;font-size:20.5px;color:#000;"><i class="k5">1</i><i class="k23">3</i><i class="k20">9</i><i class="k6">5</i><i class="k22">7</i><i class="k6">5</i><i class="k20">9</i><i class="k21">0</i><i class="k23">3</i><i class="k20">9</i><i class="k8">8</i></div></div><div class="clip" style="left:954px;top:415px;width:315px;height:28px"><div class="row" style="left:2.50px;top:5.65px;font-size:20.5px;color:#000;"><i class="k10">h</i><i class="k25">t</i><i class="k25">t</i><i class="k26">p</i><i class="k27">:</i><i class="k28">/</i><i class="k28">/</i><i class="k29">w</i><i class="k29">w</i><i class="k29">w</i><i class="k30">.</i><i class="k2">s</i><i class="k42">x</i><i class="k10">h</i><i class="k37">e</i><i class="k11">i</i><i class="k33">m</i><i class="k12">a</i><i class="k30">.</i><i class="k31">c</i><i class="k32">o</i><i class="k33">m</i></div></div><div class="clip" style="left:1270px;top:415px;width:321px;height:28px"><div class="row" style="left:2.50px;top:5.65px;font-size:20.5px;color:#000;"><i class="k10">h</i><i class="k37">e</i><i class="k11">i</i><i class="k33">m</i><i class="k12">a</i><i class="k34">@</i><i class="k2">s</i><i class="k42">x</i><i class="k10">h</i><i class="k37">e</i><i class="k11">i</i><i class="k33">m</i><i class="k12">a</i><i class="k30">.</i><i class="k31">c</i><i class="k32">o</i><i class="k33">m</i></div></div><div class="clip" style="left:46px;top:444px;width:80px;height:28px"><div class="row" style="left:-11.50px;top:5.65px;font-size:20.5px;color:#000;"><i class="k0">n</i><i class="k1">g</i><i class="k2">s</i><i class="k3">u</i></div></div><div class="clip" style="left:127px;top:444px;width:115px;height:28px"><div class="row" style="left:47.00px;top:5.65px;font-size:20.5px;color:#000;"><i class="k4">2</i><i class="k5">1</i><i class="k5">1</i><i class="k5">1</i><i class="k21">0</i><i class="k21">0</i></div></div><div class="clip" style="left:243px;top:444px;width:164px;height:28px"><div class="row" style="left:2.50px;top:5.65px;font-size:20.5px;color:#000;"><i class="k9">C</i><i class="k10">h</i><i class="k11">i</i><i class="k0">n</i><i class="k12">a</i><i class="k13"> </i><i class="k14">(</i><i class="k15">M</i><i class="k12">a</i><i class="k11">i</i><i class="k0">n</i><i class="k16">l</i><i class="k12">a</i><i class="k0">n</i><i class="k17">d</i><i class="k18">)</i></div></div><div class="clip" style="left:408px;top:444px;width:222px;height:28px"><div class="row" style="left:2.50px;top:5.65px;font-size:20.5px;color:#000;"><i class="k21">0</i><i class="k21">0</i><i class="k8">8</i><i class="k7">6</i><i class="k19">-</i><i class="k4">2</i><i class="k6">5</i><i class="k19">-</i><i class="k6">5</i><i class="k8">8</i><i class="k7">6</i><i class="k22">7</i><i class="k21">0</i><i class="k22">7</i><i class="k22">7</i><i class="k6">5</i></div></div><div class="clip" style="left:631px;top:444px;width:166px;height:28px"><div class="row" style="left:2.50px;top:5.65px;font-size:20.5px;color:#000;"><i class="k21">0</i><i class="k21">0</i><i class="k8">8</i><i class="k7">6</i><i class="k19">-</i><i class="k4">2</i><i class="k6">5</i><i class="k19">-</i><i class="k6">5</i><i class="k8">8</i><i class="k7">6</i><i class="k22">7</i><i class="k21">0</i><i class="k22">7</i><i class="k22">7</i><i class="k23">3</i></div></div><div class="clip" style="left:798px;top:444px;width:155px;height:28px"><div class="row" style="left:32.00px;top:5.65px;font-size:20.5px;color:#000;"><i class="k5">1</i><i class="k8">8</i><i class="k7">6</i><i class="k7">6</i><i class="k5">1</i><i class="k4">2</i><i class="k21">0</i><i class="k21">0</i><i class="k21">0</i><i class="k23">3</i><i class="k6">5</i></div></div><div class="clip" style="left:954px;top:444px;width:315px;height:28px"><div class="row" style="left:2.50px;top:5.65px;font-size:20.5px;color:#000;"><i class="k10">h</i><i class="k25">t</i><i class="k25">t</i><i class="k26">p</i><i class="k27">:</i><i class="k28">/</i><i class="k28">/</i><i class="k29">w</i><i class="k29">w</i><i class="k29">w</i><i class="k30">.</i><i class="k2">s</i><i class="k3">u</i><i class="k36">f</i><i class="k37">e</i><i class="k11">i</i><i class="k36">f</i><i class="k32">o</i><i class="k32">o</i><i class="k17">d</i><i class="k30">.</i><i class="k31">c</i><i class="k32">o</i><i class="k33">m</i></div></div><div class="clip" style="left:1270px;top:444px;width:321px;height:28px"><div class="row" style="left:2.50px;top:5.65px;font-size:20.5px;color:#000;"><i class="k11">i</i><i class="k0">n</i><i class="k36">f</i><i class="k32">o</i><i class="k34">@</i><i class="k2">s</i><i class="k3">u</i><i class="k36">f</i><i class="k37">e</i><i class="k11">i</i><i class="k36">f</i><i class="k32">o</i><i class="k32">o</i><i class="k17">d</i><i class="k30">.</i><i class="k31">c</i><i class="k32">o</i><i class="k33">m</i></div></div><div class="clip" style="left:46px;top:473px;width:80px;height:28px"><div class="row" style="left:-7.50px;top:5.65px;font-size:20.5px;color:#000;"><i class="k12">a</i><i class="k0">n</i><i class="k1">g</i><i class="k17">d</i><i class="k32">o</i><i class="k0">n</i><i class="k1">g</i></div></div><div class="clip" style="left:127px;top:473px;width:115px;height:28px"><div class="row" style="left:47.00px;top:5.65px;font-size:20.5px;color:#000;"><i class="k6">5</i><i class="k5">1</i><i class="k8">8</i><i class="k5">1</i><i class="k21">0</i><i class="k20">9</i></div></div><div class="clip" style="left:243px;top:473px;width:164px;height:28px"><div class="row" style="left:2.50px;top:5.65px;font-size:20.5px;color:#000;"><i class="k9">C</i><i class="k10">h</i><i class="k11">i</i><i class="k0">n</i><i class="k12">a</i><i class="k13"> </i><i class="k14">(</i><i class="k15">M</i><i class="k12">a</i><i class="k11">i</i><i class="k0">n</i><i class="k16">l</i><i class="k12">a</i><i class="k0">n</i><i class="k17">d</i><i class="k18">)</i></div></div><div class="clip" style="left:408px;top:473px;width:222px;height:28px"><div class="row" style="left:2.50px;top:5.65px;font-size:20.5px;color:#000;"><i class="k8">8</i><i class="k7">6</i><i class="k19">-</i><i class="k22">7</i><i class="k6">5</i><i class="k6">5</i><i class="k19">-</i><i class="k8">8</i><i class="k20">9</i><i class="k6">5</i><i class="k21">0</i><i class="k7">6</i><i class="k21">0</i><i class="k6">5</i><i class="k8">8</i></div></div><div class="clip" style="left:954px;top:473px;width:315px;height:28px"><div class="row" style="left:2.50px;top:5.65px;font-size:20.5px;color:#000;"><i class="k10">h</i><i class="k25">t</i><i class="k25">t</i><i class="k26">p</i><i class="k27">:</i><i class="k28">/</i><i class="k28">/</i><i class="k29">w</i><i class="k29">w</i><i class="k29">w</i><i class="k30">.</i><i class="k2">s</i><i class="k2">s</i><i class="k41">k</i><i class="k26">p</i><i class="k12">a</i><i class="k43">r</i><i class="k25">t</i><i class="k2">s</i><i class="k30">.</i><i class="k31">c</i><i class="k32">o</i><i class="k33">m</i></div></div><div class="clip" style="left:1270px;top:473px;width:321px;height:28px"><div class="row" style="left:2.50px;top:5.65px;font-size:20.5px;color:#000;"><i class="k2">s</i><i class="k37">e</i><i class="k43">r</i><i class="k44">v</i><i class="k11">i</i><i class="k31">c</i><i class="k37">e</i><i class="k34">@</i><i class="k2">s</i><i class="k37">e</i><i class="k12">a</i><i class="k2">s</i><i class="k41">k</i><i class="k45">y</i><i class="k19">-</i><i class="k25">t</i><i class="k37">e</i><i class="k31">c</i><i class="k10">h</i><i class="k30">.</i><i class="k31">c</i><i class="k32">o</i><i class="k33">m</i></div></div><div class="clip" style="left:46px;top:502px;width:80px;height:28px"><div class="row" style="left:-11.70px;top:5.65px;font-size:20.5px;color:#000;"><i class="k12">a</i><i class="k0">n</i><i class="k1">g</i><i class="k10">h</i><i class="k12">a</i><i class="k11">i</i></div></div><div class="clip" style="left:127px;top:502px;width:115px;height:28px"><div class="row" style="left:47.00px;top:5.65px;font-size:20.5px;color:#000;"><i class="k4">2</i><i class="k21">0</i><i class="k5">1</i><i class="k23">3</i><i class="k5">1</i><i class="k6">5</i></div></div><div class="clip" style="left:243px;top:502px;width:164px;height:28px"><div class="row" style="left:2.50px;top:5.65px;font-size:20.5px;color:#000;"><i class="k9">C</i><i class="k10">h</i><i class="k11">i</i><i class="k0">n</i><i class="k12">a</i><i class="k13"> </i><i class="k14">(</i><i class="k15">M</i><i class="k12">a</i><i class="k11">i</i><i class="k0">n</i><i class="k16">l</i><i class="k12">a</i><i class="k0">n</i><i class="k17">d</i><i class="k18">)</i></div></div><div class="clip" style="left:408px;top:502px;width:222px;height:28px"><div class="row" style="left:2.50px;top:5.65px;font-size:20.5px;color:#000;"><i class="k8">8</i><i class="k7">6</i><i class="k19">-</i><i class="k4">2</i><i class="k5">1</i><i class="k19">-</i><i class="k7">6</i><i class="k8">8</i><i class="k21">0</i><i class="k7">6</i><i class="k8">8</i><i class="k24">4</i><i class="k21">0</i><i class="k20">9</i></div></div><div class="clip" style="left:631px;top:502px;width:166px;height:28px"><div class="row" style="left:2.50px;top:5.65px;font-size:20.5px;color:#000;"><i class="k8">8</i><i class="k7">6</i><i class="k19">-</i><i class="k4">2</i><i class="k5">1</i><i class="k19">-</i><i class="k7">6</i><i class="k8">8</i><i class="k5">1</i><i class="k4">2</i><i class="k5">1</i><i class="k4">2</i><i class="k4">2</i><i class="k21">0</i></div></div><div class="clip" style="left:798px;top:502px;width:155px;height:28px"><div class="row" style="left:-19.00px;top:5.65px;font-size:20.5px;color:#000;"><i class="k21">0</i><i class="k21">0</i><i class="k8">8</i><i class="k7">6</i><i class="k19">-</i><i class="k5">1</i><i class="k23">3</i><i class="k23">3</i><i class="k22">7</i><i class="k5">1</i><i class="k20">9</i><i class="k6">5</i><i class="k22">7</i><i class="k21">0</i><i class="k5">1</i><i class="k6">5</i></div></div><div class="clip" style="left:954px;top:502px;width:315px;height:28px"><div class="row" style="left:2.50px;top:5.65px;font-size:20.5px;color:#000;"><i class="k10">h</i><i class="k25">t</i><i class="k25">t</i><i class="k26">p</i><i class="k27">:</i><i class="k28">/</i><i class="k28">/</i><i class="k29">w</i><i class="k29">w</i><i class="k29">w</i><i class="k30">.</i><i class="k31">c</i><i class="k0">n</i><i class="k33">m</i><i class="k37">e</i><i class="k25">t</i><i class="k12">a</i><i class="k16">l</i><i class="k17">d</i><i class="k37">e</i><i class="k25">t</i><i class="k37">e</i><i class="k31">c</i><i class="k25">t</i><i class="k32">o</i><i class="k43">r</i><i class="k30">.</i><i class="k31">c</i><i class="k32">o</i><i class="k33">m</i></div></div><div class="clip" style="left:1270px;top:502px;width:321px;height:28px"><div class="row" style="left:2.50px;top:5.65px;font-size:20.5px;color:#000;"><i class="k37">e</i><i class="k44">v</i><i class="k12">a</i><i class="k0">n</i><i class="k34">@</i><i class="k31">c</i><i class="k0">n</i><i class="k33">m</i><i class="k37">e</i><i class="k25">t</i><i class="k12">a</i><i class="k16">l</i><i class="k17">d</i><i class="k37">e</i><i class="k25">t</i><i class="k37">e</i><i class="k31">c</i><i class="k25">t</i><i class="k32">o</i><i class="k43">r</i><i class="k30">.</i><i class="k31">c</i><i class="k32">o</i><i class="k33">m</i></div></div><div class="clip" style="left:46px;top:531px;width:80px;height:28px"><div class="row" style="left:-11.50px;top:5.65px;font-size:20.5px;color:#000;"><i class="k0">n</i><i class="k1">g</i><i class="k2">s</i><i class="k3">u</i></div></div><div class="clip" style="left:127px;top:531px;width:115px;height:28px"><div class="row" style="left:47.00px;top:5.65px;font-size:20.5px;color:#000;"><i class="k4">2</i><i class="k5">1</i><i class="k24">4</i><i class="k5">1</i><i class="k6">5</i><i class="k23">3</i></div></div><div class="clip" style="left:243px;top:531px;width:164px;height:28px"><div class="row" style="left:2.50px;top:5.65px;font-size:20.5px;color:#000;"><i class="k9">C</i><i class="k10">h</i><i class="k11">i</i><i class="k0">n</i><i class="k12">a</i><i class="k13"> </i><i class="k14">(</i><i class="k15">M</i><i class="k12">a</i><i class="k11">i</i><i class="k0">n</i><i class="k16">l</i><i class="k12">a</i><i class="k0">n</i><i class="k17">d</i><i class="k18">)</i></div></div><div class="clip" style="left:408px;top:531px;width:222px;height:28px"><div class="row" style="left:2.50px;top:5.65px;font-size:20.5px;color:#000;"><i class="k8">8</i><i class="k7">6</i><i class="k19">-</i><i class="k21">0</i><i class="k6">5</i><i class="k5">1</i><i class="k21">0</i><i class="k19">-</i><i class="k8">8</i><i class="k23">3</i><i class="k6">5</i><i class="k7">6</i><i class="k20">9</i><i class="k7">6</i><i class="k20">9</i><i class="k20">9</i></div></div><div class="clip" style="left:631px;top:531px;width:166px;height:28px"><div class="row" style="left:2.50px;top:5.65px;font-size:20.5px;color:#000;"><i class="k8">8</i><i class="k7">6</i><i class="k19">-</i><i class="k21">0</i><i class="k6">5</i><i class="k5">1</i><i class="k21">0</i><i class="k19">-</i><i class="k8">8</i><i class="k23">3</i><i class="k6">5</i><i class="k7">6</i><i class="k20">9</i><i class="k6">5</i><i class="k20">9</i><i class="k20">9</i></div></div><div class="clip" style="left:798px;top:531px;width:155px;height:28px"><div class="row" style="left:32.00px;top:5.65px;font-size:20.5px;color:#000;"><i class="k5">1</i><i class="k23">3</i><i class="k20">9</i><i class="k4">2</i><i class="k5">1</i><i class="k6">5</i><i class="k23">3</i><i class="k4">2</i><i class="k6">5</i><i class="k4">2</i><i class="k24">4</i></div></div><div class="clip" style="left:954px;top:531px;width:315px;height:28px"><div class="row" style="left:2.50px;top:5.65px;font-size:20.5px;color:#000;"><i class="k10">h</i><i class="k25">t</i><i class="k25">t</i><i class="k26">p</i><i class="k27">:</i><i class="k28">/</i><i class="k28">/</i><i class="k29">w</i><i class="k29">w</i><i class="k29">w</i><i class="k30">.</i><i class="k42">x</i><i class="k33">m</i><i class="k35">z</i><i class="k41">k</i><i class="k36">f</i><i class="k30">.</i><i class="k31">c</i><i class="k32">o</i><i class="k33">m</i></div></div><div class="clip" style="left:1270px;top:531px;width:321px;height:28px"><div class="row" style="left:2.50px;top:5.65px;font-size:20.5px;color:#000;"><i class="k2">s</i><i class="k12">a</i><i class="k16">l</i><i class="k37">e</i><i class="k2">s</i><i class="k34">@</i><i class="k42">x</i><i class="k33">m</i><i class="k35">z</i><i class="k41">k</i><i class="k36">f</i><i class="k30">.</i><i class="k31">c</i><i class="k32">o</i><i class="k33">m</i></div></div><div class="clip" style="left:46px;top:560px;width:80px;height:28px"><div class="row" style="left:-11.70px;top:5.65px;font-size:20.5px;color:#000;"><i class="k12">a</i><i class="k0">n</i><i class="k17">d</i><i class="k32">o</i><i class="k0">n</i><i class="k1">g</i></div></div><div class="clip" style="left:127px;top:560px;width:115px;height:28px"><div class="row" style="left:47.00px;top:5.65px;font-size:20.5px;color:#000;"><i class="k4">2</i><i class="k7">6</i><i class="k7">6</i><i class="k23">3</i><i class="k21">0</i><i class="k21">0</i></div></div><div class="clip" style="left:243px;top:560px;width:164px;height:28px"><div class="row" style="left:2.50px;top:5.65px;font-size:20.5px;color:#000;"><i class="k9">C</i><i class="k10">h</i><i class="k11">i</i><i class="k0">n</i><i class="k12">a</i><i class="k13"> </i><i class="k14">(</i><i class="k15">M</i><i class="k12">a</i><i class="k11">i</i><i class="k0">n</i><i class="k16">l</i><i class="k12">a</i><i class="k0">n</i><i class="k17">d</i><i class="k18">)</i></div></div><div class="clip" style="left:408px;top:560px;width:222px;height:28px"><div class="row" style="left:2.50px;top:5.65px;font-size:20.5px;color:#000;"><i class="k8">8</i><i class="k7">6</i><i class="k19">-</i><i class="k21">0</i><i class="k6">5</i><i class="k23">3</i><i class="k4">2</i><i class="k19">-</i><i class="k8">8</i><i class="k23">3</i><i class="k4">2</i><i class="k24">4</i><i class="k7">6</i><i class="k8">8</i><i class="k8">8</i><i class="k8">8</i></div></div><div class="clip" style="left:631px;top:560px;width:166px;height:28px"><div class="row" style="left:2.50px;top:5.65px;font-size:20.5px;color:#000;"><i class="k8">8</i><i class="k7">6</i><i class="k19">-</i><i class="k21">0</i><i class="k6">5</i><i class="k23">3</i><i class="k4">2</i><i class="k19">-</i><i class="k8">8</i><i class="k23">3</i><i class="k4">2</i><i class="k24">4</i><i class="k22">7</i><i class="k8">8</i><i class="k8">8</i><i class="k8">8</i></div></div><div class="clip" style="left:798px;top:560px;width:155px;height:28px"><div class="row" style="left:37.00px;top:5.65px;font-size:20.5px;color:#000;"><i class="k8">8</i><i class="k30">.</i><i class="k7">6</i><i class="k5">1</i><i class="k23">3</i><i class="k23">3</i><i class="k7">6</i><i class="k38">E</i><i class="k39">+</i><i class="k5">1</i><i class="k4">2</i></div></div><div class="clip" style="left:954px;top:560px;width:315px;height:28px"><div class="row" style="left:2.50px;top:5.65px;font-size:20.5px;color:#000;"><i class="k10">h</i><i class="k25">t</i><i class="k25">t</i><i class="k26">p</i><i class="k27">:</i><i class="k28">/</i><i class="k28">/</i><i class="k29">w</i><i class="k29">w</i><i class="k29">w</i><i class="k30">.</i><i class="k10">h</i><i class="k12">a</i><i class="k11">i</i><i class="k45">y</i><i class="k32">o</i><i class="k0">n</i><i class="k1">g</i><i class="k30">.</i><i class="k31">c</i><i class="k31">c</i></div></div><div class="clip" style="left:1270px;top:560px;width:321px;height:28px"><div class="row" style="left:2.50px;top:5.65px;font-size:20.5px;color:#000;"><i class="k40">j</i><i class="k35">z</i><i class="k42">x</i><i class="k11">i</i><i class="k12">a</i><i class="k32">o</i><i class="k35">z</i><i class="k10">h</i><i class="k11">i</i><i class="k34">@</i><i class="k5">1</i><i class="k7">6</i><i class="k23">3</i><i class="k30">.</i><i class="k31">c</i><i class="k32">o</i><i class="k33">m</i></div></div><div class="clip" style="left:46px;top:589px;width:80px;height:28px"><div class="row" style="left:-7.50px;top:5.65px;font-size:20.5px;color:#000;"><i class="k12">a</i><i class="k0">n</i><i class="k1">g</i><i class="k17">d</i><i class="k32">o</i><i class="k0">n</i><i class="k1">g</i></div></div><div class="clip" style="left:127px;top:589px;width:115px;height:28px"><div class="row" style="left:47.00px;top:5.65px;font-size:20.5px;color:#000;"><i class="k6">5</i><i class="k5">1</i><i class="k21">0</i><i class="k24">4</i><i class="k23">3</i><i class="k21">0</i></div></div><div class="clip" style="left:243px;top:589px;width:164px;height:28px"><div class="row" style="left:2.50px;top:5.65px;font-size:20.5px;color:#000;"><i class="k9">C</i><i class="k10">h</i><i class="k11">i</i><i class="k0">n</i><i class="k12">a</i><i class="k13"> </i><i class="k14">(</i><i class="k15">M</i><i class="k12">a</i><i class="k11">i</i><i class="k0">n</i><i class="k16">l</i><i class="k12">a</i><i class="k0">n</i><i class="k17">d</i><i class="k18">)</i></div></div><div class="clip" style="left:408px;top:589px;width:222px;height:28px"><div class="row" style="left:2.50px;top:5.65px;font-size:20.5px;color:#000;"><i class="k21">0</i><i class="k21">0</i><i class="k8">8</i><i class="k7">6</i><i class="k19">-</i><i class="k21">0</i><i class="k4">2</i><i class="k21">0</i><i class="k19">-</i><i class="k4">2</i><i class="k8">8</i><i class="k20">9</i><i class="k8">8</i><i class="k4">2</i><i class="k6">5</i><i class="k24">4</i><i class="k23">3</i></div></div><div class="clip" style="left:631px;top:589px;width:166px;height:28px"><div class="row" style="left:2.50px;top:5.65px;font-size:20.5px;color:#000;"><i class="k21">0</i><i class="k21">0</i><i class="k8">8</i><i class="k7">6</i><i class="k19">-</i><i class="k21">0</i><i class="k4">2</i><i class="k21">0</i><i class="k19">-</i><i class="k23">3</i><i class="k7">6</i><i class="k23">3</i><i class="k22">7</i><i class="k4">2</i><i class="k6">5</i><i class="k22">7</i><i class="k8">8</i></div></div><div class="clip" style="left:798px;top:589px;width:155px;height:28px"><div class="row" style="left:37.00px;top:5.65px;font-size:20.5px;color:#000;"><i class="k8">8</i><i class="k30">.</i><i class="k7">6</i><i class="k5">1</i><i class="k6">5</i><i class="k7">6</i><i class="k23">3</i><i class="k38">E</i><i class="k39">+</i><i class="k5">1</i><i class="k4">2</i></div></div><div class="clip" style="left:954px;top:589px;width:315px;height:28px"><div class="row" style="left:2.50px;top:5.65px;font-size:20.5px;color:#000;"><i class="k10">h</i><i class="k25">t</i><i class="k25">t</i><i class="k26">p</i><i class="k27">:</i><i class="k28">/</i><i class="k28">/</i><i class="k29">w</i><i class="k29">w</i><i class="k29">w</i><i class="k30">.</i><i class="k36">f</i><i class="k45">y</i><i class="k11">i</i><i class="k16">l</i><i class="k11">i</i><i class="k1">g</i><i class="k10">h</i><i class="k25">t</i><i class="k30">.</i><i class="k31">c</i><i class="k32">o</i><i class="k33">m</i><i class="k28">/</i></div></div><div class="clip" style="left:1270px;top:589px;width:321px;height:28px"><div class="row" style="left:2.50px;top:5.65px;font-size:20.5px;color:#000;"><i class="k36">f</i><i class="k45">y</i><i class="k11">i</i><i class="k2">s</i><i class="k25">t</i><i class="k12">a</i><i class="k1">g</i><i class="k37">e</i><i class="k16">l</i><i class="k11">i</i><i class="k1">g</i><i class="k10">h</i><i class="k25">t</i><i class="k11">i</i><i class="k0">n</i><i class="k1">g</i><i class="k34">@</i><i class="k10">h</i><i class="k32">o</i><i class="k25">t</i><i class="k33">m</i><i class="k12">a</i><i class="k11">i</i><i class="k16">l</i><i class="k30">.</i><i class="k31">c</i><i class="k32">o</i><i class="k33">m</i></div></div><div class="clip" style="left:46px;top:618px;width:80px;height:28px"><div class="row" style="left:-12.40px;top:5.65px;font-size:20.5px;color:#000;"><i class="k37">e</i><i class="k40">j</i><i class="k11">i</i><i class="k12">a</i><i class="k0">n</i><i class="k1">g</i></div></div><div class="clip" style="left:243px;top:618px;width:164px;height:28px"><div class="row" style="left:2.50px;top:5.65px;font-size:20.5px;color:#000;"><i class="k9">C</i><i class="k10">h</i><i class="k11">i</i><i class="k0">n</i><i class="k12">a</i><i class="k13"> </i><i class="k14">(</i><i class="k15">M</i><i class="k12">a</i><i class="k11">i</i><i class="k0">n</i><i class="k16">l</i><i class="k12">a</i><i class="k0">n</i><i class="k17">d</i><i class="k18">)</i></div></div><div class="clip" style="left:408px;top:618px;width:222px;height:28px"><div class="row" style="left:2.50px;top:5.65px;font-size:20.5px;color:#000;"><i class="k8">8</i><i class="k7">6</i><i class="k19">-</i><i class="k6">5</i><i class="k22">7</i><i class="k5">1</i><i class="k19">-</i><i class="k6">5</i><i class="k7">6</i><i class="k7">6</i><i class="k8">8</i><i class="k20">9</i><i class="k6">5</i><i class="k6">5</i><i class="k21">0</i></div></div><div class="clip" style="left:631px;top:618px;width:166px;height:28px"><div class="row" style="left:2.50px;top:5.65px;font-size:20.5px;color:#000;"><i class="k8">8</i><i class="k7">6</i><i class="k19">-</i><i class="k6">5</i><i class="k22">7</i><i class="k5">1</i><i class="k19">-</i><i class="k6">5</i><i class="k7">6</i><i class="k7">6</i><i class="k8">8</i><i class="k20">9</i><i class="k6">5</i><i class="k20">9</i><i class="k20">9</i></div></div><div class="clip" style="left:798px;top:618px;width:155px;height:28px"><div class="row" style="left:32.00px;top:5.65px;font-size:20.5px;color:#000;"><i class="k5">1</i><i class="k23">3</i><i class="k8">8</i><i class="k7">6</i><i class="k22">7</i><i class="k5">1</i><i class="k5">1</i><i class="k20">9</i><i class="k20">9</i><i class="k22">7</i><i class="k20">9</i></div></div><div class="clip" style="left:954px;top:618px;width:315px;height:28px"><div class="row" style="left:2.50px;top:5.65px;font-size:20.5px;color:#000;"><i class="k10">h</i><i class="k25">t</i><i class="k25">t</i><i class="k26">p</i><i class="k27">:</i><i class="k28">/</i><i class="k28">/</i><i class="k29">w</i><i class="k29">w</i><i class="k29">w</i><i class="k30">.</i><i class="k37">e</i><i class="k32">o</i><i class="k37">e</i><i class="k25">t</i><i class="k37">e</i><i class="k31">c</i><i class="k10">h</i><i class="k0">n</i><i class="k11">i</i><i class="k31">c</i><i class="k30">.</i><i class="k31">c</i><i class="k32">o</i><i class="k33">m</i></div></div><div class="clip" style="left:1270px;top:618px;width:321px;height:28px"><div class="row" style="left:2.50px;top:5.65px;font-size:20.5px;color:#000;"><i class="k10">h</i><i class="k37">e</i><i class="k16">l</i><i class="k12">a</i><i class="k0">n</i><i class="k1">g</i><i class="k3">u</i><i class="k34">@</i><i class="k37">e</i><i class="k32">o</i><i class="k37">e</i><i class="k25">t</i><i class="k37">e</i><i class="k31">c</i><i class="k10">h</i><i class="k0">n</i><i class="k11">i</i><i class="k31">c</i><i class="k30">.</i><i class="k31">c</i><i class="k32">o</i><i class="k33">m</i></div></div><div class="clip" style="left:46px;top:647px;width:80px;height:28px"><div class="row" style="left:-7.50px;top:5.65px;font-size:20.5px;color:#000;"><i class="k12">a</i><i class="k0">n</i><i class="k1">g</i><i class="k17">d</i><i class="k32">o</i><i class="k0">n</i><i class="k1">g</i></div></div><div class="clip" style="left:127px;top:647px;width:115px;height:28px"><div class="row" style="left:47.00px;top:5.65px;font-size:20.5px;color:#000;"><i class="k6">5</i><i class="k4">2</i><i class="k23">3</i><i class="k7">6</i><i class="k6">5</i><i class="k6">5</i></div></div><div class="clip" style="left:243px;top:647px;width:164px;height:28px"><div class="row" style="left:2.50px;top:5.65px;font-size:20.5px;color:#000;"><i class="k9">C</i><i class="k10">h</i><i class="k11">i</i><i class="k0">n</i><i class="k12">a</i><i class="k13"> </i><i class="k14">(</i><i class="k15">M</i><i class="k12">a</i><i class="k11">i</i><i class="k0">n</i><i class="k16">l</i><i class="k12">a</i><i class="k0">n</i><i class="k17">d</i><i class="k18">)</i></div></div><div class="clip" style="left:408px;top:647px;width:222px;height:28px"><div class="row" style="left:2.50px;top:5.65px;font-size:20.5px;color:#000;"><i class="k8">8</i><i class="k7">6</i><i class="k19">-</i><i class="k22">7</i><i class="k7">6</i><i class="k20">9</i><i class="k19">-</i><i class="k8">8</i><i class="k22">7</i><i class="k8">8</i><i class="k20">9</i><i class="k20">9</i><i class="k21">0</i><i class="k23">3</i><i class="k23">3</i></div></div><div class="clip" style="left:631px;top:647px;width:166px;height:28px"><div class="row" style="left:2.50px;top:5.65px;font-size:20.5px;color:#000;"><i class="k8">8</i><i class="k7">6</i><i class="k19">-</i><i class="k22">7</i><i class="k7">6</i><i class="k20">9</i><i class="k19">-</i><i class="k8">8</i><i class="k22">7</i><i class="k23">3</i><i class="k23">3</i><i class="k7">6</i><i class="k20">9</i><i class="k8">8</i><i class="k21">0</i></div></div><div class="clip" style="left:798px;top:647px;width:155px;height:28px"><div class="row" style="left:2.50px;top:5.65px;font-size:20.5px;color:#000;"><i class="k8">8</i><i class="k7">6</i><i class="k19">-</i><i class="k5">1</i><i class="k23">3</i><i class="k7">6</i><i class="k8">8</i><i class="k7">6</i><i class="k5">1</i><i class="k8">8</i><i class="k24">4</i><i class="k7">6</i><i class="k8">8</i><i class="k8">8</i></div></div><div class="clip" style="left:954px;top:647px;width:315px;height:28px"><div class="row" style="left:2.50px;top:5.65px;font-size:20.5px;color:#000;"><i class="k10">h</i><i class="k25">t</i><i class="k25">t</i><i class="k26">p</i><i class="k27">:</i><i class="k28">/</i><i class="k28">/</i><i class="k29">w</i><i class="k29">w</i><i class="k29">w</i><i class="k30">.</i><i class="k45">y</i><i class="k2">s</i><i class="k25">t</i><i class="k12">a</i><i class="k33">m</i><i class="k26">p</i><i class="k37">e</i><i class="k43">r</i><i class="k30">.</i><i class="k31">c</i><i class="k32">o</i><i class="k33">m</i></div></div><div class="clip" style="left:1270px;top:647px;width:321px;height:28px"><div class="row" style="left:2.50px;top:5.65px;font-size:20.5px;color:#000;"><i class="k46">b</i><i class="k32">o</i><i class="k43">r</i><i class="k16">l</i><i class="k11">i</i><i class="k0">n</i><i class="k34">@</i><i class="k45">y</i><i class="k2">s</i><i class="k25">t</i><i class="k12">a</i><i class="k33">m</i><i class="k26">p</i><i class="k37">e</i><i class="k43">r</i><i class="k30">.</i><i class="k31">c</i><i class="k32">o</i><i class="k33">m</i></div></div><div class="clip" style="left:46px;top:676px;width:80px;height:28px"><div class="row" style="left:-20.00px;top:5.65px;font-size:20.5px;color:#000;"><i class="k37">e</i><i class="k0">n</i><i class="k12">a</i><i class="k0">n</i></div></div><div class="clip" style="left:127px;top:676px;width:115px;height:28px"><div class="row" style="left:47.00px;top:5.65px;font-size:20.5px;color:#000;"><i class="k24">4</i><i class="k6">5</i><i class="k5">1</i><i class="k4">2</i><i class="k6">5</i><i class="k4">2</i></div></div><div class="clip" style="left:243px;top:676px;width:164px;height:28px"><div class="row" style="left:2.50px;top:5.65px;font-size:20.5px;color:#000;"><i class="k9">C</i><i class="k10">h</i><i class="k11">i</i><i class="k0">n</i><i class="k12">a</i><i class="k13"> </i><i class="k14">(</i><i class="k15">M</i><i class="k12">a</i><i class="k11">i</i><i class="k0">n</i><i class="k16">l</i><i class="k12">a</i><i class="k0">n</i><i class="k17">d</i><i class="k18">)</i></div></div><div class="clip" style="left:408px;top:676px;width:222px;height:28px"><div class="row" style="left:2.50px;top:5.65px;font-size:20.5px;color:#000;"><i class="k21">0</i><i class="k21">0</i><i class="k8">8</i><i class="k7">6</i><i class="k19">-</i><i class="k23">3</i><i class="k22">7</i><i class="k5">1</i><i class="k19">-</i><i class="k6">5</i><i class="k6">5</i><i class="k6">5</i><i class="k5">1</i><i class="k23">3</i><i class="k20">9</i><i class="k20">9</i><i class="k20">9</i></div></div><div class="clip" style="left:631px;top:676px;width:166px;height:28px"><div class="row" style="left:2.50px;top:5.65px;font-size:20.5px;color:#000;"><i class="k21">0</i><i class="k21">0</i><i class="k8">8</i><i class="k7">6</i><i class="k19">-</i><i class="k23">3</i><i class="k22">7</i><i class="k5">1</i><i class="k19">-</i><i class="k7">6</i><i class="k24">4</i><i class="k5">1</i><i class="k23">3</i><i class="k23">3</i><i class="k21">0</i><i class="k8">8</i><i class="k8">8</i></div></div><div class="clip" style="left:798px;top:676px;width:155px;height:28px"><div class="row" style="left:32.00px;top:5.65px;font-size:20.5px;color:#000;"><i class="k5">1</i><i class="k6">5</i><i class="k8">8</i><i class="k23">3</i><i class="k8">8</i><i class="k4">2</i><i class="k5">1</i><i class="k22">7</i><i class="k20">9</i><i class="k20">9</i><i class="k20">9</i></div></div><div class="clip" style="left:954px;top:676px;width:315px;height:28px"><div class="row" style="left:2.50px;top:5.65px;font-size:20.5px;color:#000;"><i class="k10">h</i><i class="k25">t</i><i class="k25">t</i><i class="k26">p</i><i class="k27">:</i><i class="k28">/</i><i class="k28">/</i><i class="k29">w</i><i class="k29">w</i><i class="k29">w</i><i class="k30">.</i><i class="k10">h</i><i class="k3">u</i><i class="k12">a</i><i class="k47">q</i><i class="k3">u</i><i class="k12">a</i><i class="k0">n</i><i class="k1">g</i><i class="k43">r</i><i class="k32">o</i><i class="k3">u</i><i class="k26">p</i><i class="k30">.</i><i class="k31">c</i><i class="k32">o</i><i class="k33">m</i></div></div><div class="clip" style="left:1270px;top:676px;width:321px;height:28px"><div class="row" style="left:2.50px;top:5.65px;font-size:20.5px;color:#000;"><i class="k11">i</i><i class="k0">n</i><i class="k36">f</i><i class="k32">o</i><i class="k34">@</i><i class="k10">h</i><i class="k3">u</i><i class="k12">a</i><i class="k47">q</i><i class="k3">u</i><i class="k12">a</i><i class="k0">n</i><i class="k30">.</i><i class="k31">c</i><i class="k32">o</i><i class="k33">m</i></div></div><div class="clip" style="left:46px;top:705px;width:80px;height:28px"><div class="row" style="left:-5.70px;top:5.65px;font-size:20.5px;color:#000;"><i class="k11">i</i><i class="k12">a</i><i class="k0">n</i></div></div><div class="clip" style="left:127px;top:705px;width:115px;height:28px"><div class="row" style="left:47.00px;top:5.65px;font-size:20.5px;color:#000;"><i class="k23">3</i><i class="k7">6</i><i class="k5">1</i><i class="k21">0</i><i class="k21">0</i><i class="k7">6</i></div></div><div class="clip" style="left:243px;top:705px;width:164px;height:28px"><div class="row" style="left:2.50px;top:5.65px;font-size:20.5px;color:#000;"><i class="k9">C</i><i class="k10">h</i><i class="k11">i</i><i class="k0">n</i><i class="k12">a</i><i class="k13"> </i><i class="k14">(</i><i class="k15">M</i><i class="k12">a</i><i class="k11">i</i><i class="k0">n</i><i class="k16">l</i><i class="k12">a</i><i class="k0">n</i><i class="k17">d</i><i class="k18">)</i></div></div><div class="clip" style="left:408px;top:705px;width:222px;height:28px"><div class="row" style="left:2.50px;top:5.65px;font-size:20.5px;color:#000;"><i class="k8">8</i><i class="k7">6</i><i class="k19">-</i><i class="k6">5</i><i class="k20">9</i><i class="k4">2</i><i class="k19">-</i><i class="k6">5</i><i class="k21">0</i><i class="k23">3</i><i class="k6">5</i><i class="k4">2</i><i class="k7">6</i><i class="k23">3</i></div></div><div class="clip" style="left:631px;top:705px;width:166px;height:28px"><div class="row" style="left:2.50px;top:5.65px;font-size:20.5px;color:#000;"><i class="k8">8</i><i class="k7">6</i><i class="k19">-</i><i class="k6">5</i><i class="k20">9</i><i class="k4">2</i><i class="k19">-</i><i class="k6">5</i><i class="k21">0</i><i class="k23">3</i><i class="k6">5</i><i class="k4">2</i><i class="k8">8</i><i class="k23">3</i></div></div><div class="clip" style="left:798px;top:705px;width:155px;height:28px"><div class="row" style="left:2.50px;top:5.65px;font-size:20.5px;color:#000;"><i class="k8">8</i><i class="k7">6</i><i class="k19">-</i><i class="k5">1</i><i class="k23">3</i><i class="k20">9</i><i class="k6">5</i><i class="k20">9</i><i class="k4">2</i><i class="k24">4</i><i class="k4">2</i><i class="k6">5</i><i class="k5">1</i><i class="k8">8</i></div></div><div class="clip" style="left:954px;top:705px;width:315px;height:28px"><div class="row" style="left:2.50px;top:5.65px;font-size:20.5px;color:#000;"><i class="k10">h</i><i class="k25">t</i><i class="k25">t</i><i class="k26">p</i><i class="k27">:</i><i class="k28">/</i><i class="k28">/</i><i class="k29">w</i><i class="k29">w</i><i class="k29">w</i><i class="k30">.</i><i class="k25">t</i><i class="k32">o</i><i class="k26">p</i><i class="k2">s</i><i class="k12">a</i><i class="k36">f</i><i class="k37">e</i><i class="k25">t</i><i class="k45">y</i><i class="k29">w</i><i class="k37">e</i><i class="k12">a</i><i class="k43">r</i><i class="k30">.</i><i class="k31">c</i><i class="k32">o</i><i class="k33">m</i></div></div><div class="clip" style="left:1270px;top:705px;width:321px;height:28px"><div class="row" style="left:2.50px;top:5.65px;font-size:20.5px;color:#000;"><i class="k43">r</i><i class="k42">x</i><i class="k45">y</i><i class="k7">6</i><i class="k7">6</i><i class="k7">6</i><i class="k34">@</i><i class="k10">h</i><i class="k32">o</i><i class="k25">t</i><i class="k33">m</i><i class="k12">a</i><i class="k11">i</i><i class="k16">l</i><i class="k30">.</i><i class="k31">c</i><i class="k32">o</i><i class="k33">m</i></div></div><div class="clip" style="left:46px;top:734px;width:80px;height:28px"><div class="row" style="left:-6.00px;top:5.65px;font-size:20.5px;color:#000;"><i class="k40">j</i><i class="k11">i</i><i class="k0">n</i><i class="k1">g</i></div></div><div class="clip" style="left:127px;top:734px;width:115px;height:28px"><div class="row" style="left:47.00px;top:5.65px;font-size:20.5px;color:#000;"><i class="k5">1</i><i class="k21">0</i><i class="k21">0</i><i class="k21">0</i><i class="k22">7</i><i class="k7">6</i></div></div><div class="clip" style="left:243px;top:734px;width:164px;height:28px"><div class="row" style="left:2.50px;top:5.65px;font-size:20.5px;color:#000;"><i class="k9">C</i><i class="k10">h</i><i class="k11">i</i><i class="k0">n</i><i class="k12">a</i><i class="k13"> </i><i class="k14">(</i><i class="k15">M</i><i class="k12">a</i><i class="k11">i</i><i class="k0">n</i><i class="k16">l</i><i class="k12">a</i><i class="k0">n</i><i class="k17">d</i><i class="k18">)</i></div></div><div class="clip" style="left:408px;top:734px;width:222px;height:28px"><div class="row" style="left:2.50px;top:5.65px;font-size:20.5px;color:#000;"><i class="k8">8</i><i class="k7">6</i><i class="k19">-</i><i class="k5">1</i><i class="k21">0</i><i class="k19">-</i><i class="k7">6</i><i class="k22">7</i><i class="k6">5</i><i class="k21">0</i><i class="k7">6</i><i class="k21">0</i><i class="k4">2</i><i class="k5">1</i></div></div><div class="clip" style="left:631px;top:734px;width:166px;height:28px"><div class="row" style="left:2.50px;top:5.65px;font-size:20.5px;color:#000;"><i class="k8">8</i><i class="k7">6</i><i class="k19">-</i><i class="k5">1</i><i class="k21">0</i><i class="k19">-</i><i class="k7">6</i><i class="k22">7</i><i class="k6">5</i><i class="k21">0</i><i class="k7">6</i><i class="k21">0</i><i class="k4">2</i><i class="k5">1</i></div></div><div class="clip" style="left:798px;top:734px;width:155px;height:28px"><div class="row" style="left:32.00px;top:5.65px;font-size:20.5px;color:#000;"><i class="k5">1</i><i class="k23">3</i><i class="k5">1</i><i class="k7">6</i><i class="k5">1</i><i class="k4">2</i><i class="k8">8</i><i class="k21">0</i><i class="k8">8</i><i class="k23">3</i><i class="k8">8</i></div></div><div class="clip" style="left:954px;top:734px;width:315px;height:28px"><div class="row" style="left:2.50px;top:5.65px;font-size:20.5px;color:#000;"><i class="k10">h</i><i class="k25">t</i><i class="k25">t</i><i class="k26">p</i><i class="k27">:</i><i class="k28">/</i><i class="k28">/</i><i class="k29">w</i><i class="k29">w</i><i class="k29">w</i><i class="k30">.</i><i class="k46">b</i><i class="k37">e</i><i class="k12">a</i><i class="k3">u</i><i class="k25">t</i><i class="k45">y</i><i class="k19">-</i><i class="k37">e</i><i class="k47">q</i><i class="k3">u</i><i class="k11">i</i><i class="k26">p</i><i class="k33">m</i><i class="k37">e</i><i class="k0">n</i><i class="k25">t</i><i class="k2">s</i><i class="k30">.</i><i class="k31">c</i><i class="k32">o</i><i class="k33">m</i></div></div><div class="clip" style="left:1270px;top:734px;width:321px;height:28px"><div class="row" style="left:2.50px;top:5.65px;font-size:20.5px;color:#000;"><i class="k11">i</i><i class="k26">p</i><i class="k16">l</i><i class="k16">l</i><i class="k12">a</i><i class="k2">s</i><i class="k37">e</i><i class="k43">r</i><i class="k34">@</i><i class="k10">h</i><i class="k32">o</i><i class="k25">t</i><i class="k33">m</i><i class="k12">a</i><i class="k11">i</i><i class="k16">l</i><i class="k30">.</i><i class="k31">c</i><i class="k32">o</i><i class="k33">m</i></div></div><div class="clip" style="left:46px;top:763px;width:80px;height:28px"><div class="row" style="left:-7.50px;top:5.65px;font-size:20.5px;color:#000;"><i class="k12">a</i><i class="k0">n</i><i class="k1">g</i><i class="k17">d</i><i class="k32">o</i><i class="k0">n</i><i class="k1">g</i></div></div><div class="clip" style="left:243px;top:763px;width:164px;height:28px"><div class="row" style="left:2.50px;top:5.65px;font-size:20.5px;color:#000;"><i class="k9">C</i><i class="k10">h</i><i class="k11">i</i><i class="k0">n</i><i class="k12">a</i><i class="k13"> </i><i class="k14">(</i><i class="k15">M</i><i class="k12">a</i><i class="k11">i</i><i class="k0">n</i><i class="k16">l</i><i class="k12">a</i><i class="k0">n</i><i class="k17">d</i><i class="k18">)</i></div></div><div class="clip" style="left:408px;top:763px;width:222px;height:28px"><div class="row" style="left:2.50px;top:5.65px;font-size:20.5px;color:#000;"><i class="k8">8</i><i class="k7">6</i><i class="k19">-</i><i class="k22">7</i><i class="k6">5</i><i class="k6">5</i><i class="k19">-</i><i class="k4">2</i><i class="k22">7</i><i class="k8">8</i><i class="k7">6</i><i class="k4">2</i><i class="k21">0</i><i class="k22">7</i><i class="k4">2</i></div></div><div class="clip" style="left:798px;top:763px;width:155px;height:28px"><div class="row" style="left:2.50px;top:5.65px;font-size:20.5px;color:#000;"><i class="k8">8</i><i class="k7">6</i><i class="k19">-</i><i class="k5">1</i><i class="k8">8</i><i class="k20">9</i><i class="k21">0</i><i class="k4">2</i><i class="k8">8</i><i class="k24">4</i><i class="k20">9</i><i class="k24">4</i><i class="k21">0</i><i class="k21">0</i></div></div><div class="clip" style="left:954px;top:763px;width:315px;height:28px"><div class="row" style="left:2.50px;top:5.65px;font-size:20.5px;color:#000;"><i class="k10">h</i><i class="k25">t</i><i class="k25">t</i><i class="k26">p</i><i class="k27">:</i><i class="k28">/</i><i class="k28">/</i><i class="k29">w</i><i class="k29">w</i><i class="k29">w</i><i class="k30">.</i><i class="k16">l</i><i class="k32">o</i><i class="k25">t</i><i class="k3">u</i><i class="k2">s</i><i class="k21">0</i><i class="k6">5</i><i class="k5">1</i><i class="k23">3</i><i class="k30">.</i><i class="k31">c</i><i class="k32">o</i><i class="k33">m</i></div></div><div class="clip" style="left:1270px;top:763px;width:321px;height:28px"><div class="row" style="left:2.50px;top:5.65px;font-size:20.5px;color:#000;"><i class="k2">s</i><i class="k12">a</i><i class="k16">l</i><i class="k37">e</i><i class="k2">s</i><i class="k34">@</i><i class="k16">l</i><i class="k32">o</i><i class="k25">t</i><i class="k3">u</i><i class="k2">s</i><i class="k21">0</i><i class="k6">5</i><i class="k5">1</i><i class="k23">3</i><i class="k30">.</i><i class="k31">c</i><i class="k32">o</i><i class="k33">m</i></div></div><div class="clip" style="left:46px;top:792px;width:80px;height:28px"><div class="row" style="left:-12.40px;top:5.65px;font-size:20.5px;color:#000;"><i class="k37">e</i><i class="k40">j</i><i class="k11">i</i><i class="k12">a</i><i class="k0">n</i><i class="k1">g</i></div></div><div class="clip" style="left:127px;top:792px;width:115px;height:28px"><div class="row" style="left:47.00px;top:5.65px;font-size:20.5px;color:#000;"><i class="k23">3</i><i class="k4">2</i><i class="k5">1</i><i class="k4">2</i><i class="k21">0</i><i class="k21">0</i></div></div><div class="clip" style="left:243px;top:792px;width:164px;height:28px"><div class="row" style="left:2.50px;top:5.65px;font-size:20.5px;color:#000;"><i class="k9">C</i><i class="k10">h</i><i class="k11">i</i><i class="k0">n</i><i class="k12">a</i><i class="k13"> </i><i class="k14">(</i><i class="k15">M</i><i class="k12">a</i><i class="k11">i</i><i class="k0">n</i><i class="k16">l</i><i class="k12">a</i><i class="k0">n</i><i class="k17">d</i><i class="k18">)</i></div></div><div class="clip" style="left:408px;top:792px;width:222px;height:28px"><div class="row" style="left:2.50px;top:5.65px;font-size:20.5px;color:#000;"><i class="k8">8</i><i class="k7">6</i><i class="k19">-</i><i class="k6">5</i><i class="k22">7</i><i class="k20">9</i><i class="k19">-</i><i class="k8">8</i><i class="k20">9</i><i class="k21">0</i><i class="k8">8</i><i class="k5">1</i><i class="k6">5</i><i class="k8">8</i><i class="k23">3</i></div></div><div class="clip" style="left:631px;top:792px;width:166px;height:28px"><div class="row" style="left:2.50px;top:5.65px;font-size:20.5px;color:#000;"><i class="k8">8</i><i class="k7">6</i><i class="k19">-</i><i class="k6">5</i><i class="k22">7</i><i class="k20">9</i><i class="k19">-</i><i class="k8">8</i><i class="k20">9</i><i class="k21">0</i><i class="k8">8</i><i class="k7">6</i><i class="k6">5</i><i class="k6">5</i><i class="k6">5</i></div></div><div class="clip" style="left:798px;top:792px;width:155px;height:28px"><div class="row" style="left:32.00px;top:5.65px;font-size:20.5px;color:#000;"><i class="k5">1</i><i class="k6">5</i><i class="k4">2</i><i class="k6">5</i><i class="k8">8</i><i class="k20">9</i><i class="k8">8</i><i class="k24">4</i><i class="k7">6</i><i class="k21">0</i><i class="k4">2</i></div></div><div class="clip" style="left:954px;top:792px;width:315px;height:28px"><div class="row" style="left:2.50px;top:5.65px;font-size:20.5px;color:#000;"><i class="k10">h</i><i class="k25">t</i><i class="k25">t</i><i class="k26">p</i><i class="k27">:</i><i class="k28">/</i><i class="k28">/</i><i class="k29">w</i><i class="k29">w</i><i class="k29">w</i><i class="k30">.</i><i class="k40">j</i><i class="k11">i</i><i class="k12">a</i><i class="k17">d</i><i class="k37">e</i><i class="k16">l</i><i class="k37">e</i><i class="k43">r</i><i class="k30">.</i><i class="k31">c</i><i class="k32">o</i><i class="k33">m</i></div></div><div class="clip" style="left:1270px;top:792px;width:321px;height:28px"><div class="row" style="left:2.50px;top:5.65px;font-size:20.5px;color:#000;"><i class="k11">i</i><i class="k0">n</i><i class="k36">f</i><i class="k32">o</i><i class="k34">@</i><i class="k40">j</i><i class="k11">i</i><i class="k12">a</i><i class="k17">d</i><i class="k37">e</i><i class="k16">l</i><i class="k37">e</i><i class="k17">d</i><i class="k32">o</i><i class="k32">o</i><i class="k43">r</i><i class="k30">.</i><i class="k31">c</i><i class="k32">o</i><i class="k33">m</i></div></div><div class="clip" style="left:46px;top:821px;width:80px;height:28px"><div class="row" style="left:-12.40px;top:5.65px;font-size:20.5px;color:#000;"><i class="k37">e</i><i class="k40">j</i><i class="k11">i</i><i class="k12">a</i><i class="k0">n</i><i class="k1">g</i></div></div><div class="clip" style="left:127px;top:821px;width:115px;height:28px"><div class="row" style="left:47.00px;top:5.65px;font-size:20.5px;color:#000;"><i class="k23">3</i><i class="k5">1</i><i class="k8">8</i><i class="k21">0</i><i class="k4">2</i><i class="k21">0</i></div></div><div class="clip" style="left:243px;top:821px;width:164px;height:28px"><div class="row" style="left:2.50px;top:5.65px;font-size:20.5px;color:#000;"><i class="k9">C</i><i class="k10">h</i><i class="k11">i</i><i class="k0">n</i><i class="k12">a</i><i class="k13"> </i><i class="k14">(</i><i class="k15">M</i><i class="k12">a</i><i class="k11">i</i><i class="k0">n</i><i class="k16">l</i><i class="k12">a</i><i class="k0">n</i><i class="k17">d</i><i class="k18">)</i></div></div><div class="clip" style="left:408px;top:821px;width:222px;height:28px"><div class="row" style="left:2.50px;top:5.65px;font-size:20.5px;color:#000;"><i class="k8">8</i><i class="k7">6</i><i class="k19">-</i><i class="k21">0</i><i class="k6">5</i><i class="k22">7</i><i class="k7">6</i><i class="k19">-</i><i class="k8">8</i><i class="k20">9</i><i class="k5">1</i><i class="k8">8</i><i class="k4">2</i><i class="k21">0</i><i class="k21">0</i><i class="k23">3</i></div></div><div class="clip" style="left:631px;top:821px;width:166px;height:28px"><div class="row" style="left:2.50px;top:5.65px;font-size:20.5px;color:#000;"><i class="k8">8</i><i class="k7">6</i><i class="k19">-</i><i class="k21">0</i><i class="k6">5</i><i class="k22">7</i><i class="k7">6</i><i class="k19">-</i><i class="k8">8</i><i class="k24">4</i><i class="k21">0</i><i class="k6">5</i><i class="k21">0</i><i class="k20">9</i><i class="k4">2</i><i class="k7">6</i></div></div><div class="clip" style="left:798px;top:821px;width:155px;height:28px"><div class="row" style="left:2.50px;top:5.65px;font-size:20.5px;color:#000;"><i class="k8">8</i><i class="k7">6</i><i class="k19">-</i><i class="k5">1</i><i class="k8">8</i><i class="k20">9</i><i class="k7">6</i><i class="k8">8</i><i class="k24">4</i><i class="k8">8</i><i class="k21">0</i><i class="k4">2</i><i class="k20">9</i><i class="k21">0</i></div></div><div class="clip" style="left:954px;top:821px;width:315px;height:28px"><div class="row" style="left:2.50px;top:5.65px;font-size:20.5px;color:#000;"><i class="k10">h</i><i class="k25">t</i><i class="k25">t</i><i class="k26">p</i><i class="k27">:</i><i class="k28">/</i><i class="k28">/</i><i class="k29">w</i><i class="k29">w</i><i class="k29">w</i><i class="k30">.</i><i class="k41">k</i><i class="k12">a</i><i class="k11">i</i><i class="k42">x</i><i class="k11">i</i><i class="k12">a</i><i class="k0">n</i><i class="k1">g</i><i class="k30">.</i><i class="k31">c</i><i class="k32">o</i><i class="k33">m</i></div></div><div class="clip" style="left:1270px;top:821px;width:321px;height:28px"><div class="row" style="left:2.50px;top:5.65px;font-size:20.5px;color:#000;"><i class="k11">i</i><i class="k0">n</i><i class="k36">f</i><i class="k32">o</i><i class="k34">@</i><i class="k41">k</i><i class="k12">a</i><i class="k11">i</i><i class="k42">x</i><i class="k11">i</i><i class="k12">a</i><i class="k0">n</i><i class="k1">g</i><i class="k30">.</i><i class="k31">c</i><i class="k32">o</i><i class="k33">m</i></div></div><div class="clip" style="left:46px;top:850px;width:80px;height:28px"><div class="row" style="left:-7.50px;top:5.65px;font-size:20.5px;color:#000;"><i class="k12">a</i><i class="k0">n</i><i class="k1">g</i><i class="k17">d</i><i class="k32">o</i><i class="k0">n</i><i class="k1">g</i></div></div><div class="clip" style="left:127px;top:850px;width:115px;height:28px"><div class="row" style="left:47.00px;top:5.65px;font-size:20.5px;color:#000;"><i class="k6">5</i><i class="k5">1</i><i class="k6">5</i><i class="k8">8</i><i class="k21">0</i><i class="k21">0</i></div></div><div class="clip" style="left:243px;top:850px;width:164px;height:28px"><div class="row" style="left:2.50px;top:5.65px;font-size:20.5px;color:#000;"><i class="k9">C</i><i class="k10">h</i><i class="k11">i</i><i class="k0">n</i><i class="k12">a</i><i class="k13"> </i><i class="k14">(</i><i class="k15">M</i><i class="k12">a</i><i class="k11">i</i><i class="k0">n</i><i class="k16">l</i><i class="k12">a</i><i class="k0">n</i><i class="k17">d</i><i class="k18">)</i></div></div><div class="clip" style="left:408px;top:850px;width:222px;height:28px"><div class="row" style="left:2.50px;top:5.65px;font-size:20.5px;color:#000;"><i class="k8">8</i><i class="k7">6</i><i class="k19">-</i><i class="k22">7</i><i class="k6">5</i><i class="k24">4</i><i class="k19">-</i><i class="k8">8</i><i class="k6">5</i><i class="k8">8</i><i class="k20">9</i><i class="k23">3</i><i class="k21">0</i><i class="k6">5</i><i class="k6">5</i></div></div><div class="clip" style="left:631px;top:850px;width:166px;height:28px"><div class="row" style="left:2.50px;top:5.65px;font-size:20.5px;color:#000;"><i class="k8">8</i><i class="k7">6</i><i class="k19">-</i><i class="k22">7</i><i class="k6">5</i><i class="k24">4</i><i class="k19">-</i><i class="k8">8</i><i class="k6">5</i><i class="k8">8</i><i class="k20">9</i><i class="k8">8</i><i class="k5">1</i><i class="k22">7</i><i class="k4">2</i></div></div><div class="clip" style="left:798px;top:850px;width:155px;height:28px"><div class="row" style="left:2.50px;top:5.65px;font-size:20.5px;color:#000;"><i class="k8">8</i><i class="k7">6</i><i class="k13"> </i><i class="k5">1</i><i class="k23">3</i><i class="k20">9</i><i class="k7">6</i><i class="k21">0</i><i class="k4">2</i><i class="k4">2</i><i class="k22">7</i><i class="k21">0</i><i class="k4">2</i><i class="k21">0</i></div></div><div class="clip" style="left:954px;top:850px;width:315px;height:28px"><div class="row" style="left:2.50px;top:5.65px;font-size:20.5px;color:#000;"><i class="k10">h</i><i class="k25">t</i><i class="k25">t</i><i class="k26">p</i><i class="k27">:</i><i class="k28">/</i><i class="k28">/</i><i class="k29">w</i><i class="k29">w</i><i class="k29">w</i><i class="k30">.</i><i class="k2">s</i><i class="k33">m</i><i class="k11">i</i><i class="k16">l</i><i class="k32">o</i><i class="k43">r</i><i class="k30">.</i><i class="k31">c</i><i class="k32">o</i><i class="k33">m</i></div></div><div class="clip" style="left:1270px;top:850px;width:321px;height:28px"><div class="row" style="left:2.50px;top:5.65px;font-size:20.5px;color:#000;"><i class="k12">a</i><i class="k0">n</i><i class="k1">g</i><i class="k37">e</i><i class="k16">l</i><i class="k12">a</i><i class="k17">d</i><i class="k32">o</i><i class="k16">l</i><i class="k16">l</i><i class="k2">s</i><i class="k34">@</i><i class="k10">h</i><i class="k32">o</i><i class="k25">t</i><i class="k33">m</i><i class="k12">a</i><i class="k11">i</i><i class="k16">l</i><i class="k30">.</i><i class="k31">c</i><i class="k32">o</i><i class="k33">m</i></div></div><div class="clip" style="left:46px;top:879px;width:80px;height:28px"><div class="row" style="left:-12.40px;top:5.65px;font-size:20.5px;color:#000;"><i class="k37">e</i><i class="k40">j</i><i class="k11">i</i><i class="k12">a</i><i class="k0">n</i><i class="k1">g</i></div></div><div class="clip" style="left:127px;top:879px;width:115px;height:28px"><div class="row" style="left:47.00px;top:5.65px;font-size:20.5px;color:#000;"><i class="k23">3</i><i class="k5">1</i><i class="k4">2</i><i class="k6">5</i><i class="k21">0</i><i class="k21">0</i></div></div><div class="clip" style="left:243px;top:879px;width:164px;height:28px"><div class="row" style="left:2.50px;top:5.65px;font-size:20.5px;color:#000;"><i class="k9">C</i><i class="k10">h</i><i class="k11">i</i><i class="k0">n</i><i class="k12">a</i><i class="k13"> </i><i class="k14">(</i><i class="k15">M</i><i class="k12">a</i><i class="k11">i</i><i class="k0">n</i><i class="k16">l</i><i class="k12">a</i><i class="k0">n</i><i class="k17">d</i><i class="k18">)</i></div></div><div class="clip" style="left:408px;top:879px;width:222px;height:28px"><div class="row" style="left:2.50px;top:5.65px;font-size:20.5px;color:#000;"><i class="k8">8</i><i class="k7">6</i><i class="k19">-</i><i class="k6">5</i><i class="k22">7</i><i class="k6">5</i><i class="k19">-</i><i class="k8">8</i><i class="k7">6</i><i class="k5">1</i><i class="k7">6</i><i class="k21">0</i><i class="k21">0</i><i class="k21">0</i><i class="k4">2</i></div></div><div class="clip" style="left:631px;top:879px;width:166px;height:28px"><div class="row" style="left:2.50px;top:5.65px;font-size:20.5px;color:#000;"><i class="k8">8</i><i class="k7">6</i><i class="k19">-</i><i class="k6">5</i><i class="k22">7</i><i class="k6">5</i><i class="k19">-</i><i class="k8">8</i><i class="k7">6</i><i class="k5">1</i><i class="k7">6</i><i class="k21">0</i><i class="k21">0</i><i class="k21">0</i><i class="k23">3</i></div></div><div class="clip" style="left:798px;top:879px;width:155px;height:28px"><div class="row" style="left:32.00px;top:5.65px;font-size:20.5px;color:#000;"><i class="k5">1</i><i class="k6">5</i><i class="k21">0</i><i class="k6">5</i><i class="k8">8</i><i class="k5">1</i><i class="k8">8</i><i class="k22">7</i><i class="k22">7</i><i class="k7">6</i><i class="k20">9</i></div></div><div class="clip" style="left:954px;top:879px;width:315px;height:28px"><div class="row" style="left:2.50px;top:5.65px;font-size:20.5px;color:#000;"><i class="k10">h</i><i class="k25">t</i><i class="k25">t</i><i class="k26">p</i><i class="k27">:</i><i class="k28">/</i><i class="k28">/</i><i class="k29">w</i><i class="k29">w</i><i class="k29">w</i><i class="k30">.</i><i class="k2">s</i><i class="k19">-</i><i class="k16">l</i><i class="k32">o</i><i class="k0">n</i><i class="k1">g</i><i class="k30">.</i><i class="k31">c</i><i class="k32">o</i><i class="k33">m</i></div></div><div class="clip" style="left:1270px;top:879px;width:321px;height:28px"><div class="row" style="left:2.50px;top:5.65px;font-size:20.5px;color:#000;"><i class="k2">s</i><i class="k10">h</i><i class="k37">e</i><i class="k0">n</i><i class="k1">g</i><i class="k29">w</i><i class="k37">e</i><i class="k11">i</i><i class="k29">w</i><i class="k37">e</i><i class="k11">i</i><i class="k34">@</i><i class="k2">s</i><i class="k19">-</i><i class="k16">l</i><i class="k32">o</i><i class="k0">n</i><i class="k1">g</i><i class="k30">.</i><i class="k31">c</i><i class="k32">o</i><i class="k33">m</i></div></div><div class="clip" style="left:46px;top:908px;width:80px;height:28px"><div class="row" style="left:-12.40px;top:5.65px;font-size:20.5px;color:#000;"><i class="k37">e</i><i class="k40">j</i><i class="k11">i</i><i class="k12">a</i><i class="k0">n</i><i class="k1">g</i></div></div><div class="clip" style="left:127px;top:908px;width:115px;height:28px"><div class="row" style="left:47.00px;top:5.65px;font-size:20.5px;color:#000;"><i class="k23">3</i><i class="k5">1</i><i class="k8">8</i><i class="k21">0</i><i class="k4">2</i><i class="k21">0</i></div></div><div class="clip" style="left:243px;top:908px;width:164px;height:28px"><div class="row" style="left:2.50px;top:5.65px;font-size:20.5px;color:#000;"><i class="k9">C</i><i class="k10">h</i><i class="k11">i</i><i class="k0">n</i><i class="k12">a</i><i class="k13"> </i><i class="k14">(</i><i class="k15">M</i><i class="k12">a</i><i class="k11">i</i><i class="k0">n</i><i class="k16">l</i><i class="k12">a</i><i class="k0">n</i><i class="k17">d</i><i class="k18">)</i></div></div><div class="clip" style="left:408px;top:908px;width:222px;height:28px"><div class="row" style="left:2.50px;top:5.65px;font-size:20.5px;color:#000;"><i class="k8">8</i><i class="k7">6</i><i class="k19">-</i><i class="k6">5</i><i class="k22">7</i><i class="k7">6</i><i class="k19">-</i><i class="k8">8</i><i class="k24">4</i><i class="k5">1</i><i class="k5">1</i><i class="k8">8</i><i class="k8">8</i><i class="k8">8</i><i class="k8">8</i></div></div><div class="clip" style="left:631px;top:908px;width:166px;height:28px"><div class="row" style="left:2.50px;top:5.65px;font-size:20.5px;color:#000;"><i class="k8">8</i><i class="k7">6</i><i class="k19">-</i><i class="k6">5</i><i class="k22">7</i><i class="k7">6</i><i class="k19">-</i><i class="k8">8</i><i class="k24">4</i><i class="k5">1</i><i class="k6">5</i><i class="k20">9</i><i class="k4">2</i><i class="k4">2</i><i class="k4">2</i></div></div><div class="clip" style="left:798px;top:908px;width:155px;height:28px"><div class="row" style="left:37.00px;top:5.65px;font-size:20.5px;color:#000;"><i class="k8">8</i><i class="k30">.</i><i class="k7">6</i><i class="k5">1</i><i class="k23">3</i><i class="k7">6</i><i class="k7">6</i><i class="k38">E</i><i class="k39">+</i><i class="k5">1</i><i class="k4">2</i></div></div><div class="clip" style="left:954px;top:908px;width:315px;height:28px"><div class="row" style="left:2.50px;top:5.65px;font-size:20.5px;color:#000;"><i class="k10">h</i><i class="k25">t</i><i class="k25">t</i><i class="k26">p</i><i class="k27">:</i><i class="k28">/</i><i class="k28">/</i><i class="k29">w</i><i class="k29">w</i><i class="k29">w</i><i class="k30">.</i><i class="k35">z</i><i class="k36">f</i><i class="k19">-</i><i class="k26">p</i><i class="k31">c</i><i class="k30">.</i><i class="k31">c</i><i class="k32">o</i><i class="k33">m</i></div></div><div class="clip" style="left:1270px;top:908px;width:321px;height:28px"><div class="row" style="left:2.50px;top:5.65px;font-size:20.5px;color:#000;"><i class="k35">z</i><i class="k10">h</i><i class="k12">a</i><i class="k0">n</i><i class="k1">g</i><i class="k36">f</i><i class="k12">a</i><i class="k2">s</i><i class="k3">u</i><i class="k45">y</i><i class="k37">e</i><i class="k34">@</i><i class="k5">1</i><i class="k7">6</i><i class="k23">3</i><i class="k30">.</i><i class="k31">c</i><i class="k32">o</i><i class="k33">m</i></div></div><div class="clip" style="left:46px;top:937px;width:80px;height:28px"><div class="row" style="left:-7.50px;top:5.65px;font-size:20.5px;color:#000;"><i class="k12">a</i><i class="k0">n</i><i class="k1">g</i><i class="k17">d</i><i class="k32">o</i><i class="k0">n</i><i class="k1">g</i></div></div><div class="clip" style="left:127px;top:937px;width:115px;height:28px"><div class="row" style="left:47.00px;top:5.65px;font-size:20.5px;color:#000;"><i class="k6">5</i><i class="k4">2</i><i class="k23">3</i><i class="k22">7</i><i class="k22">7</i><i class="k21">0</i></div></div><div class="clip" style="left:243px;top:937px;width:164px;height:28px"><div class="row" style="left:2.50px;top:5.65px;font-size:20.5px;color:#000;"><i class="k9">C</i><i class="k10">h</i><i class="k11">i</i><i class="k0">n</i><i class="k12">a</i><i class="k13"> </i><i class="k14">(</i><i class="k15">M</i><i class="k12">a</i><i class="k11">i</i><i class="k0">n</i><i class="k16">l</i><i class="k12">a</i><i class="k0">n</i><i class="k17">d</i><i class="k18">)</i></div></div><div class="clip" style="left:408px;top:937px;width:222px;height:28px"><div class="row" style="left:2.50px;top:5.65px;font-size:20.5px;color:#000;"><i class="k8">8</i><i class="k7">6</i><i class="k19">-</i><i class="k21">0</i><i class="k22">7</i><i class="k7">6</i><i class="k20">9</i><i class="k19">-</i><i class="k8">8</i><i class="k23">3</i><i class="k21">0</i><i class="k23">3</i><i class="k6">5</i><i class="k24">4</i><i class="k21">0</i><i class="k20">9</i></div></div><div class="clip" style="left:631px;top:937px;width:322px;height:28px"><div class="row" style="left:2.50px;top:5.65px;font-size:20.5px;color:#000;"><i class="k8">8</i><i class="k7">6</i><i class="k19">-</i><i class="k21">0</i><i class="k22">7</i><i class="k7">6</i><i class="k20">9</i><i class="k19">-</i><i class="k8">8</i><i class="k23">3</i><i class="k21">0</i><i class="k23">3</i><i class="k6">5</i><i class="k24">4</i><i class="k22">7</i><i class="k20">9</i></div></div><div class="clip" style="left:954px;top:937px;width:315px;height:28px"><div class="row" style="left:2.50px;top:5.65px;font-size:20.5px;color:#000;"><i class="k10">h</i><i class="k25">t</i><i class="k25">t</i><i class="k26">p</i><i class="k27">:</i><i class="k28">/</i><i class="k28">/</i><i class="k29">w</i><i class="k29">w</i><i class="k29">w</i><i class="k30">.</i><i class="k46">b</i><i class="k16">l</i><i class="k3">u</i><i class="k37">e</i><i class="k2">s</i><i class="k37">e</i><i class="k12">a</i><i class="k0">n</i><i class="k12">a</i><i class="k11">i</i><i class="k16">l</i><i class="k30">.</i><i class="k31">c</i><i class="k32">o</i><i class="k33">m</i></div></div><div class="clip" style="left:1270px;top:937px;width:321px;height:28px"><div class="row" style="left:2.50px;top:5.65px;font-size:20.5px;color:#000;"><i class="k31">c</i><i class="k32">o</i><i class="k16">l</i><i class="k32">o</i><i class="k43">r</i><i class="k8">8</i><i class="k8">8</i><i class="k8">8</i><i class="k34">@</i><i class="k5">1</i><i class="k4">2</i><i class="k7">6</i><i class="k30">.</i><i class="k31">c</i><i class="k32">o</i><i class="k33">m</i></div></div><div class="clip" style="left:46px;top:966px;width:80px;height:28px"><div class="row" style="left:-12.40px;top:5.65px;font-size:20.5px;color:#000;"><i class="k37">e</i><i class="k40">j</i><i class="k11">i</i><i class="k12">a</i><i class="k0">n</i><i class="k1">g</i></div></div><div class="clip" style="left:127px;top:966px;width:115px;height:28px"><div class="row" style="left:47.00px;top:5.65px;font-size:20.5px;color:#000;"><i class="k23">3</i><i class="k5">1</i><i class="k6">5</i><i class="k23">3</i><i class="k5">1</i><i class="k5">1</i></div></div><div class="clip" style="left:243px;top:966px;width:164px;height:28px"><div class="row" style="left:2.50px;top:5.65px;font-size:20.5px;color:#000;"><i class="k9">C</i><i class="k10">h</i><i class="k11">i</i><i class="k0">n</i><i class="k12">a</i><i class="k13"> </i><i class="k14">(</i><i class="k15">M</i><i class="k12">a</i><i class="k11">i</i><i class="k0">n</i><i class="k16">l</i><i class="k12">a</i><i class="k0">n</i><i class="k17">d</i><i class="k18">)</i></div></div><div class="clip" style="left:408px;top:966px;width:222px;height:28px"><div class="row" style="left:2.50px;top:5.65px;font-size:20.5px;color:#000;"><i class="k8">8</i><i class="k7">6</i><i class="k19">-</i><i class="k21">0</i><i class="k6">5</i><i class="k22">7</i><i class="k24">4</i><i class="k19">-</i><i class="k4">2</i><i class="k23">3</i><i class="k7">6</i><i class="k23">3</i><i class="k22">7</i><i class="k22">7</i><i class="k7">6</i><i class="k22">7</i></div></div><div class="clip" style="left:631px;top:966px;width:166px;height:28px"><div class="row" style="left:2.50px;top:5.65px;font-size:20.5px;color:#000;"><i class="k8">8</i><i class="k7">6</i><i class="k19">-</i><i class="k21">0</i><i class="k6">5</i><i class="k22">7</i><i class="k24">4</i><i class="k19">-</i><i class="k4">2</i><i class="k23">3</i><i class="k7">6</i><i class="k23">3</i><i class="k22">7</i><i class="k22">7</i><i class="k6">5</i><i class="k6">5</i></div></div><div class="clip" style="left:798px;top:966px;width:155px;height:28px"><div class="row" style="left:32.00px;top:5.65px;font-size:20.5px;color:#000;"><i class="k5">1</i><i class="k23">3</i><i class="k6">5</i><i class="k8">8</i><i class="k7">6</i><i class="k22">7</i><i class="k20">9</i><i class="k21">0</i><i class="k21">0</i><i class="k21">0</i><i class="k8">8</i></div></div><div class="clip" style="left:954px;top:966px;width:315px;height:28px"><div class="row" style="left:2.50px;top:5.65px;font-size:20.5px;color:#000;"><i class="k10">h</i><i class="k25">t</i><i class="k25">t</i><i class="k26">p</i><i class="k27">:</i><i class="k28">/</i><i class="k28">/</i><i class="k29">w</i><i class="k29">w</i><i class="k29">w</i><i class="k30">.</i><i class="k46">b</i><i class="k12">a</i><i class="k46">b</i><i class="k45">y</i><i class="k19">-</i><i class="k31">c</i><i class="k12">a</i><i class="k43">r</i><i class="k19">-</i><i class="k2">s</i><i class="k37">e</i><i class="k12">a</i><i class="k25">t</i><i class="k30">.</i><i class="k31">c</i><i class="k0">n</i></div></div><div class="clip" style="left:1270px;top:966px;width:321px;height:28px"><div class="row" style="left:2.50px;top:5.65px;font-size:20.5px;color:#000;"><i class="k2">s</i><i class="k12">a</i><i class="k16">l</i><i class="k37">e</i><i class="k2">s</i><i class="k34">@</i><i class="k46">b</i><i class="k12">a</i><i class="k46">b</i><i class="k45">y</i><i class="k19">-</i><i class="k31">c</i><i class="k12">a</i><i class="k43">r</i><i class="k19">-</i><i class="k2">s</i><i class="k37">e</i><i class="k12">a</i><i class="k25">t</i><i class="k30">.</i><i class="k31">c</i><i class="k0">n</i></div></div><div class="clip" style="left:46px;top:995px;width:80px;height:10px"><div class="row" style="left:-12.40px;top:5.65px;font-size:20.5px;color:#000;"><i class="k37">e</i><i class="k40">j</i><i class="k11">i</i><i class="k12">a</i><i class="k0">n</i><i class="k1">g</i></div></div><div class="clip" style="left:127px;top:995px;width:115px;height:10px"><div class="row" style="left:47.00px;top:5.65px;font-size:20.5px;color:#000;"><i class="k23">3</i><i class="k4">2</i><i class="k6">5</i><i class="k7">6</i><i class="k21">0</i><i class="k24">4</i></div></div><div class="clip" style="left:243px;top:995px;width:164px;height:10px"><div class="row" style="left:2.50px;top:5.65px;font-size:20.5px;color:#000;"><i class="k9">C</i><i class="k10">h</i><i class="k11">i</i><i class="k0">n</i><i class="k12">a</i><i class="k13"> </i><i class="k14">(</i><i class="k15">M</i><i class="k12">a</i><i class="k11">i</i><i class="k0">n</i><i class="k16">l</i><i class="k12">a</i><i class="k0">n</i><i class="k17">d</i><i class="k18">)</i></div></div><div class="clip" style="left:408px;top:995px;width:222px;height:10px"><div class="row" style="left:2.50px;top:5.65px;font-size:20.5px;color:#000;"><i class="k8">8</i><i class="k7">6</i><i class="k19">-</i><i class="k6">5</i><i class="k22">7</i><i class="k22">7</i><i class="k19">-</i><i class="k8">8</i><i class="k7">6</i><i class="k8">8</i><i class="k8">8</i><i class="k21">0</i><i class="k8">8</i><i class="k22">7</i><i class="k8">8</i></div></div><div class="clip" style="left:631px;top:995px;width:166px;height:10px"><div class="row" style="left:2.50px;top:5.65px;font-size:20.5px;color:#000;"><i class="k8">8</i><i class="k7">6</i><i class="k19">-</i><i class="k6">5</i><i class="k22">7</i><i class="k22">7</i><i class="k19">-</i><i class="k8">8</i><i class="k7">6</i><i class="k8">8</i><i class="k22">7</i><i class="k20">9</i><i class="k22">7</i><i class="k21">0</i><i class="k20">9</i></div></div><div class="clip" style="left:798px;top:995px;width:155px;height:10px"><div class="row" style="left:32.00px;top:5.65px;font-size:20.5px;color:#000;"><i class="k5">1</i><i class="k6">5</i><i class="k5">1</i><i class="k7">6</i><i class="k22">7</i><i class="k8">8</i><i class="k8">8</i><i class="k22">7</i><i class="k20">9</i><i class="k20">9</i><i class="k20">9</i></div></div><div class="clip" style="left:954px;top:995px;width:315px;height:10px"><div class="row" style="left:2.50px;top:5.65px;font-size:20.5px;color:#000;"><i class="k10">h</i><i class="k25">t</i><i class="k25">t</i><i class="k26">p</i><i class="k27">:</i><i class="k28">/</i><i class="k28">/</i><i class="k29">w</i><i class="k29">w</i><i class="k29">w</i><i class="k30">.</i><i class="k16">l</i><i class="k32">o</i><i class="k43">r</i><i class="k12">a</i><i class="k16">l</i><i class="k30">.</i><i class="k31">c</i><i class="k32">o</i><i class="k33">m</i></div></div><div class="clip" style="left:1270px;top:995px;width:321px;height:10px"><div class="row" style="left:2.50px;top:5.65px;font-size:20.5px;color:#000;"><i class="k43">r</i><i class="k32">o</i><i class="k33">m</i><i class="k37">e</i><i class="k32">o</i><i class="k34">@</i><i class="k32">o</i><i class="k0">n</i><i class="k37">e</i><i class="k16">l</i><i class="k30">.</i><i class="k31">c</i><i class="k32">o</i><i class="k33">m</i></div></div><div class="r" style="left:45px;top:298px;width:1782px;height:32px;background:#21b877;"></div><div class="r" style="left:48px;top:301px;width:1779px;height:26px;background:#000000;"></div><div class="clip" style="left:46px;top:301px;width:80px;height:25px"><div class="row" style="left:-17.70px;top:3.65px;font-size:20.5px;color:#f2f2f2;font-weight:700;"><i class="k48">a</i><i class="k49">t</i><i class="k50">e</i></div></div><div class="clip" style="left:126.5px;top:301px;width:1700.5px;height:25px"><div class="row" style="left:3.00px;top:3.65px;font-size:20.5px;color:#f2f2f2;font-weight:700;"><i class="k51">P</i><i class="k52">o</i><i class="k53">s</i><i class="k49">t</i><i class="k48">a</i><i class="k54">l</i><i class="k55"> </i><i class="k56">C</i><i class="k52">o</i><i class="k57">d</i><i class="k50">e</i></div></div><div class="clip" style="left:242.5px;top:301px;width:1584.5px;height:25px"><div class="row" style="left:3.00px;top:3.65px;font-size:20.5px;color:#f2f2f2;font-weight:700;"><i class="k56">C</i><i class="k52">o</i><i class="k58">u</i><i class="k59">n</i><i class="k49">t</i><i class="k60">r</i><i class="k61">y</i></div></div><div class="clip" style="left:407.5px;top:301px;width:1419.5px;height:25px"><div class="row" style="left:3.00px;top:3.65px;font-size:20.5px;color:#f2f2f2;font-weight:700;"><i class="k51">P</i><i class="k62">h</i><i class="k52">o</i><i class="k59">n</i><i class="k50">e</i></div></div><div class="clip" style="left:630.5px;top:301px;width:1196.5px;height:25px"><div class="row" style="left:3.00px;top:3.65px;font-size:20.5px;color:#f2f2f2;font-weight:700;"><i class="k63">F</i><i class="k48">a</i><i class="k64">x</i></div></div><div class="clip" style="left:797.5px;top:301px;width:1029.5px;height:25px"><div class="row" style="left:3.00px;top:3.65px;font-size:20.5px;color:#f2f2f2;font-weight:700;"><i class="k65">M</i><i class="k52">o</i><i class="k66">b</i><i class="k67">i</i><i class="k54">l</i><i class="k50">e</i></div></div><div class="clip" style="left:953.5px;top:301px;width:873.5px;height:25px"><div class="row" style="left:3.00px;top:3.65px;font-size:20.5px;color:#f2f2f2;font-weight:700;"><i class="k68">W</i><i class="k50">e</i><i class="k66">b</i><i class="k53">s</i><i class="k67">i</i><i class="k49">t</i><i class="k50">e</i></div></div><div class="clip" style="left:1269.5px;top:301px;width:557.5px;height:25px"><div class="row" style="left:3.00px;top:3.65px;font-size:20.5px;color:#f2f2f2;font-weight:700;"><i class="k69">E</i><i class="k70">m</i><i class="k48">a</i><i class="k67">i</i><i class="k54">l</i><i class="k55"> </i><i class="k71">A</i><i class="k57">d</i><i class="k57">d</i><i class="k60">r</i><i class="k50">e</i><i class="k53">s</i><i class="k53">s</i></div></div><div class="clip" style="left:1591.5px;top:301px;width:235.5px;height:25px"><div class="row" style="left:3.00px;top:3.65px;font-size:20.5px;color:#f2f2f2;font-weight:700;"><i class="k63">F</i><i class="k48">a</i><i class="k72">c</i><i class="k50">e</i><i class="k66">b</i><i class="k52">o</i><i class="k52">o</i><i class="k73">k</i></div></div><div class="clip" style="left:1690.5px;top:301px;width:136.5px;height:25px"><div class="row" style="left:3.00px;top:3.65px;font-size:20.5px;color:#f2f2f2;font-weight:700;"><i class="k74">T</i><i class="k75">w</i><i class="k67">i</i><i class="k49">t</i><i class="k49">t</i><i class="k50">e</i><i class="k60">r</i></div></div><div class="r" style="left:47px;top:326px;width:6px;height:5px;background:#21b877;"></div><div class="r" style="left:0px;top:1005px;width:1853px;height:33px;background:#f3f4f6;"></div><svg class="r" style="left:20px;top:1010px;" width="22" height="22" viewBox="0 0 22 22" fill="none" stroke="#2c3340" stroke-width="1.5" stroke-linecap="round" stroke-linejoin="round"><path d="M4 2.5v17M17 2.5l-9 8.5 9 8.5" stroke="#a3a8b0" stroke-width="1.6"/></svg><svg class="r" style="left:59px;top:1010px;" width="22" height="22" viewBox="0 0 22 22" fill="none" stroke="#2c3340" stroke-width="1.5" stroke-linecap="round" stroke-linejoin="round"><path d="M14 2.5l-9 8.5 9 8.5" stroke="#a3a8b0" stroke-width="1.6"/></svg><svg class="r" style="left:98px;top:1010px;" width="22" height="22" viewBox="0 0 22 22" fill="none" stroke="#2c3340" stroke-width="1.5" stroke-linecap="round" stroke-linejoin="round"><path d="M6 2.5l9 8.5-9 8.5" stroke="#a3a8b0" stroke-width="1.6"/></svg><svg class="r" style="left:134px;top:1010px;" width="22" height="22" viewBox="0 0 22 22" fill="none" stroke="#2c3340" stroke-width="1.5" stroke-linecap="round" stroke-linejoin="round"><path d="M4 2.5l9 8.5-9 8.5M18 2.5v17" stroke="#a3a8b0" stroke-width="1.6"/></svg><div class="r" style="left:179px;top:1005px;width:97px;height:32px;background:#ffffff;"></div><div class="t" style="left:-272px;width:1000px;text-align:center;top:1016.88px;font-size:15.5px;color:#21b877;font-weight:700;">Sheet1</div><svg class="r" style="left:283px;top:1010px;" width="24" height="24" viewBox="0 0 24 24" fill="none" stroke="#2c3340" stroke-width="1.5" stroke-linecap="round" stroke-linejoin="round"><path d="M11.5 2.5v18M2.5 11.5h18" stroke="#3a4150" stroke-width="1.6"/></svg><div class="r" style="left:1079px;top:1014px;width:1px;height:15px;background:#b8bcc4;"></div><div class="r" style="left:1082px;top:1014px;width:1px;height:15px;background:#b8bcc4;"></div><div class="r" style="left:1092px;top:1011px;width:714px;height:21px;background:#e8e9ed;"></div><svg class="r" style="left:1100px;top:1016px;" width="12" height="12" viewBox="0 0 12 12" fill="none" stroke="#2c3340" stroke-width="1.5" stroke-linecap="round" stroke-linejoin="round"><path d="M8 2v8L3.5 6z" fill="#8f95a0" stroke="none"/></svg><svg class="r" style="left:1786px;top:1016px;" width="12" height="12" viewBox="0 0 12 12" fill="none" stroke="#2c3340" stroke-width="1.5" stroke-linecap="round" stroke-linejoin="round"><path d="M4 2v8l4.5-4z" fill="#8f95a0" stroke="none"/></svg><div class="r" style="left:1390px;top:1012px;width:352px;height:19px;background:#d3d6dc;border-radius:10px"></div><div class="r" style="left:1814px;top:1014px;width:1px;height:15px;background:#b8bcc4;"></div><div class="r" style="left:1817px;top:1014px;width:1px;height:15px;background:#b8bcc4;"></div><div class="r" style="left:1827px;top:271px;width:26px;height:734px;background:#f3f4f6;"></div><div class="r" style="left:1834px;top:279px;width:15px;height:1px;background:#a9aeb6;"></div><div class="r" style="left:1834px;top:283px;width:15px;height:1px;background:#a9aeb6;"></div><div class="r" style="left:1831px;top:292px;width:21px;height:713px;background:#e8e9ed;"></div><div class="r" style="left:1827px;top:299px;width:1px;height:706px;background:#d5d9e4;"></div><svg class="r" style="left:1835px;top:300px;" width="14" height="10" viewBox="0 0 14 10" fill="none" stroke="#2c3340" stroke-width="1.5" stroke-linecap="round" stroke-linejoin="round"><path d="M2 8h10L7 3z" fill="#8f95a0" stroke="none"/></svg><svg class="r" style="left:1835px;top:988px;" width="14" height="10" viewBox="0 0 14 10" fill="none" stroke="#2c3340" stroke-width="1.5" stroke-linecap="round" stroke-linejoin="round"><path d="M2 2h10L7 7z" fill="#8f95a0" stroke="none"/></svg><div class="r" style="left:1832px;top:323px;width:19px;height:55px;background:#d3d6dc;border-radius:10px"></div><div class="r" style="left:1853px;top:203px;width:67px;height:835px;background:#f5f6f8;"></div><div class="r" style="left:1852px;top:203px;width:2px;height:835px;background:#e6e8ec;"></div><div class="r" style="left:1871px;top:222px;width:30px;height:1px;background:#c2c6cc;"></div><div class="r" style="left:1871px;top:226px;width:30px;height:1px;background:#c2c6cc;"></div><svg class="r" style="left:1872px;top:259px;" width="30" height="26" viewBox="0 0 30 26" fill="none" stroke="#2c3340" stroke-width="1.5" stroke-linecap="round" stroke-linejoin="round"><rect x="3" y="8" width="4" height="15" rx="1" stroke="#9aa0aa"/><circle cx="5" cy="3.5" r="1.2" fill="#9aa0aa" stroke="none"/><rect x="10" y="2" width="16" height="4" rx="1" stroke="#9aa0aa"/><path d="M25 12v9H12M15 18l-3 3 3 3M22 14l3-3 3 3" stroke="#9aa0aa"/></svg><svg class="r" style="left:1874px;top:311px;" width="26" height="30" viewBox="0 0 26 30" fill="none" stroke="#2c3340" stroke-width="1.5" stroke-linecap="round" stroke-linejoin="round"><path d="M4 3l17 11.5-7.5 1.5 5 9.5-3.5 2-5-9.5L4.5 23z" stroke="#2c3340" stroke-width="1.6"/></svg><svg class="r" style="left:1872px;top:366px;" width="30" height="26" viewBox="0 0 30 26" fill="none" stroke="#2c3340" stroke-width="1.5" stroke-linecap="round" stroke-linejoin="round"><circle cx="5" cy="6" r="3" stroke="#9aa0aa"/><path d="M8 6h18" stroke="#9aa0aa"/><circle cx="21" cy="20" r="3" stroke="#9aa0aa"/><path d="M2 20h16M24 20h2.5" stroke="#9aa0aa"/></svg><svg class="r" style="left:1872px;top:420px;" width="28" height="28" viewBox="0 0 28 28" fill="none" stroke="#2c3340" stroke-width="1.5" stroke-linecap="round" stroke-linejoin="round"><circle cx="14" cy="14" r="11.5"/><path d="M10.5 11a3.5 3.5 0 1 1 5 3.2c-1 .5-1.5 1.2-1.5 2.3v.8"/><circle cx="14" cy="20.5" r=".9" fill="#2c3340" stroke="none"/></svg><svg class="r" style="left:1871px;top:473px;" width="30" height="30" viewBox="0 0 30 30" fill="none" stroke="#2c3340" stroke-width="1.5" stroke-linecap="round" stroke-linejoin="round"><path d="M6.3 15.8A10 10 0 1 1 9.3 20.8" stroke-width="1.6"/><path d="M3.2 13.2L6.5 16.6 9.8 13.2" stroke-width="1.6"/><path d="M16.4 8.5v6.8h5.3" stroke-width="1.7"/></svg><div class="r" style="left:1857px;top:970px;width:58px;height:1px;background:#dfe2e6;"></div><svg class="r" style="left:1874px;top:999px;" width="24" height="24" viewBox="0 0 24 24" fill="none" stroke="#2c3340" stroke-width="1.5" stroke-linecap="round" stroke-linejoin="round"><rect x="2" y="2" width="8" height="8" rx="2" stroke="#a9aeb6"/><rect x="14" y="2" width="8" height="8" rx="2" stroke="#a9aeb6"/><rect x="2" y="14" width="8" height="8" rx="2" stroke="#a9aeb6"/><rect x="14" y="14" width="8" height="8" rx="2" stroke="#a9aeb6"/></svg><div class="r" style="left:0px;top:1038px;width:1920px;height:42px;background:#f3f4f6;"></div><div class="r" style="left:0px;top:1038px;width:1920px;height:1px;background:#e3e5ea;"></div><div class="r" style="left:0px;top:1078px;width:1920px;height:2px;background:#eaebee;"></div><div class="r" style="left:72px;top:1078px;width:516px;height:2px;background:#c6c8cc;"></div><svg class="r" style="left:10px;top:1040px;" width="36" height="36" viewBox="0 0 36 36" fill="none" stroke="#2c3340" stroke-width="1.5" stroke-linecap="round" stroke-linejoin="round"><circle cx="13.7" cy="12.8" r="5.4" stroke-width="1.5"/><circle cx="13.7" cy="12.8" r="2.1" stroke-width="1.4"/><path d="M13.3 21v4.5" stroke-width="1.5"/><path d="M22.5 10.8h7a1.8 1.8 0 0 1 1.8 1.8v3.8h-3" stroke-width="1.5"/><path d="M28.3 11V28a2 2 0 0 1-2 2.2H12a2 2 0 0 1-2-2v-1.2a1.5 1.5 0 0 1 1.5-1.5h13.5v4.5" stroke-width="1.5"/></svg><div class="t" style="left:75px;top:1052.54px;font-size:15.9px;color:#2b3038;transform:scaleY(1.04);transform-origin:0 13.46px;">Average=0  Count=16  Sum=0</div><svg class="r" style="left:1187px;top:1047px;" width="24" height="24" viewBox="0 0 24 24" fill="none" stroke="#2c3340" stroke-width="1.5" stroke-linecap="round" stroke-linejoin="round"><path d="M6 4V3h15v16h-1" stroke="#b6bac2"/><rect x="2.5" y="6.5" width="15" height="15" rx="1"/><path d="M8 11v5h4"/></svg><svg class="r" style="left:1221px;top:1047px;" width="30" height="26" viewBox="0 0 30 26" fill="none" stroke="#2c3340" stroke-width="1.5" stroke-linecap="round" stroke-linejoin="round"><path d="M10 2.5h7v7h7v7h-7v7h-7v-7H3v-7h7z" stroke-width="1.8"/><path d="M10 9.5h7v7h-7z" stroke-width="1.5"/></svg><svg class="r" style="left:1252px;top:1058px" width="7" height="4" viewBox="0 0 7 4"><path d="M0 0H7L3.5 4Z" fill="#5d6470"/></svg><div class="r" style="left:1276px;top:1049px;width:1px;height:21px;background:#e0e2e6;"></div><svg class="r" style="left:1294px;top:1046px;" width="24" height="26" viewBox="0 0 24 26" fill="none" stroke="#2c3340" stroke-width="1.5" stroke-linecap="round" stroke-linejoin="round"><path d="M7 7V3.5a1.5 1.5 0 0 1 1.5-1.5h11A1.5 1.5 0 0 1 21 3.5v19a1.5 1.5 0 0 1-1.5 1.5h-11A1.5 1.5 0 0 1 7 22.5V17M7 19.5h14"/><path d="M2 12h10M9 9l3 3-3 3"/><path d="M14 22h1"/></svg><div class="r" style="left:1323px;top:1041px;width:36px;height:35px;background:#dcdfe5;border-radius:4px"></div><svg class="r" style="left:1327px;top:1048px;" width="28" height="24" viewBox="0 0 28 24" fill="none" stroke="#2c3340" stroke-width="1.5" stroke-linecap="round" stroke-linejoin="round"><rect x="2.5" y="2.5" width="23" height="19" rx="1" stroke-width="1.8"/><path d="M2.5 9h23M2.5 15h23M10 2.5v19M18 2.5v19" stroke-width="1.8"/><path d="M4 4h5v4H4zM11 4h6v4h-6zM19 4h5v4h-5zM4 10h5v4H4zM11 10h6v4h-6zM19 10h5v4h-5zM4 16h5v4H4zM11 16h6v4h-6zM19 16h5v4h-5z" fill="#c8ccd3" stroke="none"/></svg><svg class="r" style="left:1366px;top:1046px;" width="26" height="26" viewBox="0 0 26 26" fill="none" stroke="#2c3340" stroke-width="1.5" stroke-linecap="round" stroke-linejoin="round"><rect x="2.5" y="2.5" width="21" height="21" rx="1" stroke-width="1.8"/><rect x="6" y="6" width="14" height="14" stroke-width="1.5"/><path d="M13 6v14" stroke-width="1.5"/></svg><svg class="r" style="left:1405px;top:1047px;" width="28" height="24" viewBox="0 0 28 24" fill="none" stroke="#2c3340" stroke-width="1.5" stroke-linecap="round" stroke-linejoin="round"><path d="M2.5 2.5h23v19h-23z M2.5 16h13V2.5M9 2.5V16" stroke-width="1.8"/></svg><svg class="r" style="left:1442px;top:1045px;" width="30" height="27" viewBox="0 0 30 27" fill="none" stroke="#2c3340" stroke-width="1.5" stroke-linecap="round" stroke-linejoin="round"><path d="M2 17c3-5 7-8 12-8s9 3 12 8c-3 5-7 8-12 8s-9-3-12-8z"/><circle cx="14" cy="17" r="4"/><path d="M14 2v3M6 4l2 2.5M22 4l-2 2.5"/></svg><svg class="r" style="left:1473px;top:1058px" width="7" height="4" viewBox="0 0 7 4"><path d="M0 0H7L3.5 4Z" fill="#5d6470"/></svg><div class="r" style="left:1497px;top:1049px;width:1px;height:21px;background:#e0e2e6;"></div><div class="t" style="left:1510px;top:1053.47px;font-size:14.8px;color:#2b3038;transform:scaleY(1.06);transform-origin:0 12.53px;">100%</div><svg class="r" style="left:1555px;top:1058px" width="7" height="4" viewBox="0 0 7 4"><path d="M0 0H7L3.5 4Z" fill="#5d6470"/></svg><div class="r" style="left:1581px;top:1057px;width:14px;height:3px;background:#2c3340;border-radius:1px"></div><div class="r" style="left:1615px;top:1058px;width:92px;height:1px;background:#5a616d;"></div><div class="r" style="left:1722px;top:1058px;width:101px;height:1px;background:#c9ccd2;"></div><div class="r" style="left:1705px;top:1050px;width:19px;height:19px;border-radius:50%;border:1.5px solid #3a4150;background:#e9eaee"></div><svg class="r" style="left:1838px;top:1049px;" width="18" height="18" viewBox="0 0 18 18" fill="none" stroke="#2c3340" stroke-width="1.5" stroke-linecap="round" stroke-linejoin="round"><path d="M9 2v14M2 9h14" stroke-width="2.6"/></svg><svg class="r" style="left:1871px;top:1046px;" width="26" height="26" viewBox="0 0 26 26" fill="none" stroke="#2c3340" stroke-width="1.5" stroke-linecap="round" stroke-linejoin="round"><path d="M3 3l6 6M3 3v6M3 3h6M23 3l-6 6M23 3v6M23 3h-6M3 23l6-6M3 23v-6M3 23h6M23 23l-6-6M23 23v-6M23 23h-6" stroke-width="1.8"/></svg><style>.k0{width:12px;text-indent:0.30px}.k1{width:10px;text-indent:-0.70px;transform:scaleX(0.930)}.k2{width:9px;text-indent:-0.62px;transform:scaleX(0.937)}.k3{width:12px;text-indent:0.30px}.k4{width:11px;text-indent:-0.20px}.k5{width:11px;text-indent:-0.20px}.k6{width:11px;text-indent:-0.20px}.k7{width:11px;text-indent:-0.20px}.k8{width:11px;text-indent:-0.20px}.k9{width:12px;text-indent:-1.40px;transform:scaleX(0.851)}.k10{width:12px;text-indent:0.30px}.k11{width:5px;text-indent:0.22px}.k12{width:11px;text-indent:-0.20px}.k13{width:5px;text-indent:-0.35px}.k14{width:7px;text-indent:0.09px}.k15{width:19px;text-indent:0.96px}.k16{width:5px;text-indent:0.22px}.k17{width:12px;text-indent:0.30px}.k18{width:7px;text-indent:0.09px}.k19{width:7px;text-indent:0.09px}.k20{width:11px;text-indent:-0.20px}.k21{width:11px;text-indent:-0.20px}.k22{width:11px;text-indent:-0.20px}.k23{width:11px;text-indent:-0.20px}.k24{width:11px;text-indent:-0.20px}.k25{width:7px;text-indent:0.65px}.k26{width:12px;text-indent:0.30px}.k27{width:6px;text-indent:0.15px}.k28{width:9px;text-indent:1.65px}.k29{width:16px;text-indent:0.60px}.k30{width:6px;text-indent:0.15px}.k31{width:9px;text-indent:-0.62px;transform:scaleX(0.937)}.k32{width:12px;text-indent:0.30px}.k33{width:18px;text-indent:0.46px}.k34{width:20px;text-indent:-0.41px}.k35{width:9px;text-indent:-0.62px;transform:scaleX(0.937)}.k36{width:7px;text-indent:0.65px}.k37{width:11px;text-indent:-0.20px}.k38{width:11px;text-indent:-1.34px;transform:scaleX(0.848)}.k39{width:11px;text-indent:-0.49px}.k40{width:5px;text-indent:0.22px}.k41{width:10px;text-indent:-0.12px}.k42{width:10px;text-indent:-0.12px}.k43{width:8px;text-indent:0.59px}.k44{width:10px;text-indent:-0.12px}.k45{width:10px;text-indent:-0.12px}.k46{width:12px;text-indent:0.30px}.k47{width:12px;text-indent:0.30px}.k48{width:11px;text-indent:-0.20px}.k49{width:8px;text-indent:0.59px}.k50{width:11px;text-indent:-0.20px}.k51{width:12px;text-indent:-0.84px;transform:scaleX(0.922)}.k52{width:12px;text-indent:-0.26px}.k53{width:9px;text-indent:-1.20px;transform:scaleX(0.842)}.k54{width:5px;text-indent:-0.35px;transform:scaleX(0.983)}.k55{width:5px;text-indent:-0.35px}.k56{width:12px;text-indent:-1.40px;transform:scaleX(0.851)}.k57{width:12px;text-indent:-0.26px}.k58{width:12px;text-indent:-0.26px}.k59{width:12px;text-indent:-0.26px}.k60{width:8px;text-indent:0.01px}.k61{width:10px;text-indent:-0.70px;transform:scaleX(0.930)}.k62{width:12px;text-indent:-0.26px}.k63{width:10px;text-indent:-1.26px;transform:scaleX(0.846)}.k64{width:10px;text-indent:-0.70px;transform:scaleX(0.930)}.k65{width:19px;text-indent:0.96px}.k66{width:12px;text-indent:-0.26px}.k67{width:5px;text-indent:-0.35px;transform:scaleX(0.983)}.k68{width:20px;text-indent:0.33px}.k69{width:11px;text-indent:-1.34px;transform:scaleX(0.848)}.k70{width:18px;text-indent:-0.11px}.k71{width:13px;text-indent:-0.90px;transform:scaleX(0.919)}.k72{width:9px;text-indent:-1.20px;transform:scaleX(0.842)}.k73{width:11px;text-indent:-0.20px}.k74{width:11px;text-indent:-0.76px;transform:scaleX(0.926)}.k75{width:17px;text-indent:0.53px}</style></body></html>
